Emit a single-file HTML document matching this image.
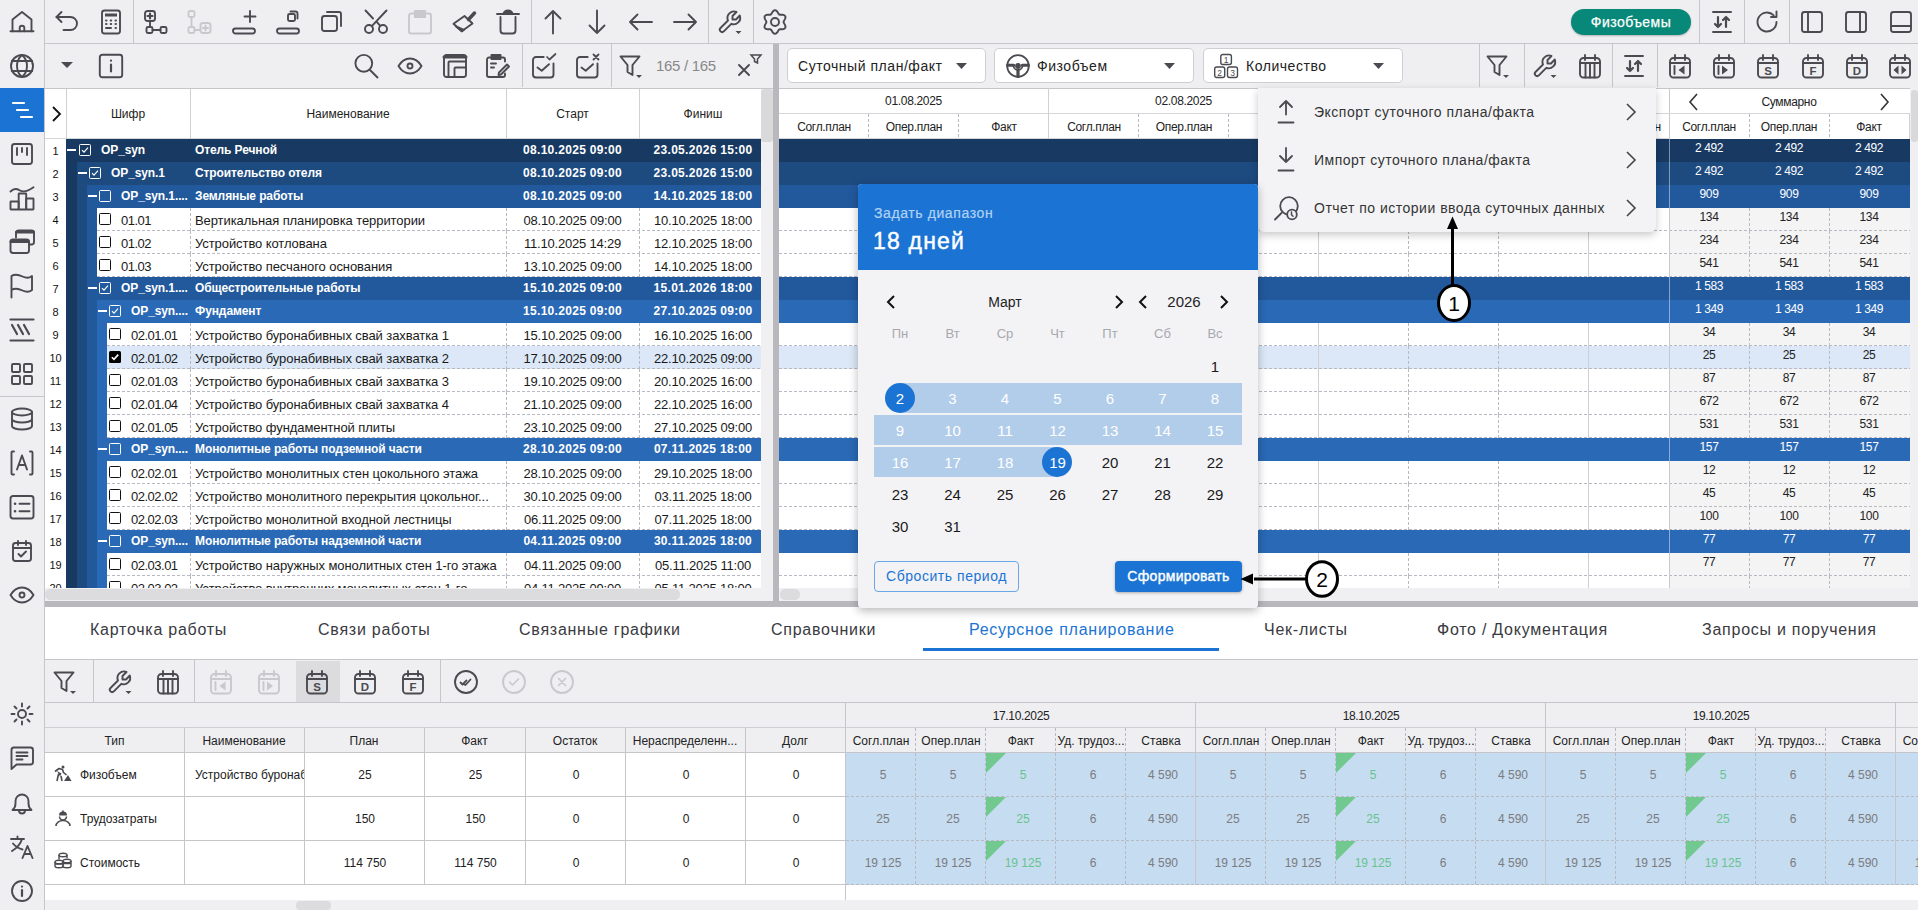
<!DOCTYPE html><html><head><meta charset="utf-8"><style>
*{margin:0;padding:0;box-sizing:border-box}
html,body{width:1918px;height:910px;overflow:hidden;background:#efeff2;font-family:"Liberation Sans",sans-serif;color:#222}
.t{position:absolute;white-space:nowrap;overflow:hidden}
svg{overflow:visible}
</style></head><body>
<div style="position:absolute;left:0px;top:0px;width:44px;height:910px;background:#efeff2"></div>
<div style="position:absolute;left:44px;top:0px;width:1px;height:910px;background:#c6c6ca"></div>
<div style="position:absolute;left:0px;top:88px;width:44px;height:44px;background:#1b74d3"></div>
<div style="position:absolute;left:0px;top:396px;width:44px;height:1px;background:#c6c6ca"></div>
<svg style="position:absolute;left:10.0px;top:10.0px;color:#4a4a50" width="24" height="24" viewBox="0 0 24 24" fill="none" stroke="#4a4a50" stroke-width="1.9" stroke-linecap="round" stroke-linejoin="round" ><path d="M0.5 21.3h23"/><path d="M2.5 21.3V9.5L12 2l9.5 7.5v11.8"/><path d="M9.7 21.3v-3.3a2.3 2.3 0 0 1 4.6 0v3.3"/></svg>
<svg style="position:absolute;left:10.0px;top:54.0px;color:#4a4a50" width="24" height="24" viewBox="0 0 24 24" fill="none" stroke="#4a4a50" stroke-width="1.9" stroke-linecap="round" stroke-linejoin="round" ><circle cx="12" cy="12" r="11"/><path d="M1.8 7h20.4M1.8 17h20.4"/><path d="M12 1c-3.5 3-5 7-5 11s1.5 8 5 11M12 1c3.5 3 5 7 5 11s-1.5 8-5 11"/></svg>
<svg style="position:absolute;left:10.0px;top:98.0px;color:#ffffff" width="24" height="24" viewBox="0 0 24 24" fill="none" stroke="#ffffff" stroke-width="1.9" stroke-linecap="round" stroke-linejoin="round" ><path d="M3 5h11M7 12h11M11 19h11" stroke-width="2.2"/></svg>
<svg style="position:absolute;left:10.0px;top:142.0px;color:#4a4a50" width="24" height="24" viewBox="0 0 24 24" fill="none" stroke="#4a4a50" stroke-width="1.9" stroke-linecap="round" stroke-linejoin="round" ><rect x="2" y="2" width="20" height="20" rx="2.5"/><path d="M7 6v7M12 6v4M17 6v7"/></svg>
<svg style="position:absolute;left:10.0px;top:186.0px;color:#4a4a50" width="24" height="24" viewBox="0 0 24 24" fill="none" stroke="#4a4a50" stroke-width="1.9" stroke-linecap="round" stroke-linejoin="round" ><rect x="0.5" y="15.5" width="8.2" height="8" rx="0.5"/><rect x="8.7" y="7.5" width="7.5" height="16" rx="0.5"/><rect x="16.2" y="12.5" width="7.3" height="11" rx="0.5"/><path d="M0.5 5.5c3-3 6-3 9-1.2s7 2 14-3"/></svg>
<svg style="position:absolute;left:10.0px;top:230.0px;color:#4a4a50" width="24" height="24" viewBox="0 0 24 24" fill="none" stroke="#4a4a50" stroke-width="1.9" stroke-linecap="round" stroke-linejoin="round" ><path d="M6 7.5V3a2.5 2.5 0 0 1 2.5-2.5h13A2.5 2.5 0 0 1 24 3v9a2.5 2.5 0 0 1-2.5 2.5H19.5"/><path d="M6.5 2h17" stroke-width="3"/><rect x="0.5" y="9.5" width="18.5" height="13.5" rx="2.5"/><path d="M1 11.5h17.5" stroke-width="3"/></svg>
<svg style="position:absolute;left:10.0px;top:274.0px;color:#4a4a50" width="24" height="24" viewBox="0 0 24 24" fill="none" stroke="#4a4a50" stroke-width="1.9" stroke-linecap="round" stroke-linejoin="round" ><path d="M1.5 23.5V2c4-2.5 8-1 11 .5s6.5 2 9.5-.5v14c-3 2.5-6.5 2-9.5.5s-7-3-11-.5"/></svg>
<svg style="position:absolute;left:10.0px;top:318.0px;color:#4a4a50" width="24" height="24" viewBox="0 0 24 24" fill="none" stroke="#4a4a50" stroke-width="1.9" stroke-linecap="round" stroke-linejoin="round" ><path d="M0.5 1.5h23M0.5 22.5h23M2 7l5 9M8 7l5 9M14 7l5 9" stroke-width="2.2"/></svg>
<svg style="position:absolute;left:10.0px;top:362.0px;color:#4a4a50" width="24" height="24" viewBox="0 0 24 24" fill="none" stroke="#4a4a50" stroke-width="1.9" stroke-linecap="round" stroke-linejoin="round" ><rect x="2" y="2" width="8" height="8" rx="1"/><rect x="14" y="2" width="8" height="8" rx="1"/><rect x="2" y="14" width="8" height="8" rx="1"/><rect x="14" y="14" width="8" height="8" rx="1"/></svg>
<svg style="position:absolute;left:10.0px;top:407.0px;color:#4a4a50" width="24" height="24" viewBox="0 0 24 24" fill="none" stroke="#4a4a50" stroke-width="1.9" stroke-linecap="round" stroke-linejoin="round" ><ellipse cx="12" cy="5" rx="10" ry="3.5"/><path d="M2 5v14c0 2 4.5 3.5 10 3.5s10-1.5 10-3.5V5M2 12c0 2 4.5 3.5 10 3.5s10-1.5 10-3.5"/></svg>
<svg style="position:absolute;left:10.0px;top:451.0px;color:#4a4a50" width="24" height="24" viewBox="0 0 24 24" fill="none" stroke="#4a4a50" stroke-width="1.9" stroke-linecap="round" stroke-linejoin="round" ><path d="M4 0.5h-1.5a1 1 0 0 0-1 1v21a1 1 0 0 0 1 1H4M20 0.5h1.5a1 1 0 0 1 1 1v21a1 1 0 0 1-1 1H20"/><path d="M7 18.5l5-14 5 14M8.5 14h7" stroke-width="1.9"/></svg>
<svg style="position:absolute;left:10.0px;top:495.0px;color:#4a4a50" width="24" height="24" viewBox="0 0 24 24" fill="none" stroke="#4a4a50" stroke-width="1.9" stroke-linecap="round" stroke-linejoin="round" ><rect x="0.5" y="1" width="23" height="22.5" rx="2.5"/><path d="M5 8.7h.1M5 16.2h.1" stroke-width="2.6"/><path d="M9.5 8.7h10M9.5 16.2h10"/></svg>
<svg style="position:absolute;left:10.0px;top:539.0px;color:#4a4a50" width="24" height="24" viewBox="0 0 24 24" fill="none" stroke="#4a4a50" stroke-width="1.9" stroke-linecap="round" stroke-linejoin="round" ><rect x="3" y="4" width="18" height="18" rx="2.5"/><path d="M3 9h18M8 2v4M16 2v4M8.5 15l2.5 2.5 5-5"/></svg>
<svg style="position:absolute;left:10.0px;top:583.0px;color:#4a4a50" width="24" height="24" viewBox="0 0 24 24" fill="none" stroke="#4a4a50" stroke-width="1.9" stroke-linecap="round" stroke-linejoin="round" ><path d="M0.5 12C3.5 7 7.5 4.5 12 4.5s8.5 2.5 11.5 7.5c-3 5-7 7.5-11.5 7.5S3.5 17 0.5 12z"/><circle cx="12" cy="12" r="2.5"/></svg>
<svg style="position:absolute;left:10.0px;top:702.0px;color:#4a4a50" width="24" height="24" viewBox="0 0 24 24" fill="none" stroke="#4a4a50" stroke-width="1.9" stroke-linecap="round" stroke-linejoin="round" ><circle cx="12" cy="12" r="4"/><path d="M12 1.5v3M12 19.5v3M1.5 12h3M19.5 12h3M4.5 4.5l2 2M17.5 17.5l2 2M4.5 19.5l2-2M17.5 6.5l2-2"/></svg>
<svg style="position:absolute;left:10.0px;top:746.0px;color:#4a4a50" width="24" height="24" viewBox="0 0 24 24" fill="none" stroke="#4a4a50" stroke-width="1.9" stroke-linecap="round" stroke-linejoin="round" ><path d="M3.5 1.5h17a2.5 2.5 0 0 1 2.5 2.5v12a2.5 2.5 0 0 1-2.5 2.5H6.5L1.5 23V4a2.5 2.5 0 0 1 2-2.5z"/><path d="M6.5 6.5h11M6.5 10h11M6.5 13.5h6"/></svg>
<svg style="position:absolute;left:10.0px;top:791.0px;color:#4a4a50" width="24" height="24" viewBox="0 0 24 24" fill="none" stroke="#4a4a50" stroke-width="1.9" stroke-linecap="round" stroke-linejoin="round" ><path d="M2.5 19c1.8-1.5 3-3 3-6.5V10a6.5 6.5 0 0 1 13 0v2.5c0 3.5 1.2 5 3 6.5z"/><path d="M9 19.5a3 3 0 0 0 6 0"/></svg>
<svg style="position:absolute;left:10.0px;top:835.0px;color:#4a4a50" width="24" height="24" viewBox="0 0 24 24" fill="none" stroke="#4a4a50" stroke-width="1.9" stroke-linecap="round" stroke-linejoin="round" ><path d="M1 4h13M7.5 1.5V4M3 8.5c2.5 3 5.5 5 9.5 6M12 4c-1.5 5-5 9-10 12"/><path d="M12.5 23l5-12 5 12M14.2 19h6.6"/></svg>
<svg style="position:absolute;left:10.0px;top:879.0px;color:#4a4a50" width="24" height="24" viewBox="0 0 24 24" fill="none" stroke="#4a4a50" stroke-width="1.9" stroke-linecap="round" stroke-linejoin="round" ><circle cx="12" cy="12" r="10"/><path d="M12 11v6M12 7.5v.1" stroke-width="2.2"/></svg>
<div style="position:absolute;left:45px;top:43px;width:1873px;height:1px;background:#c6c6ca"></div>
<div style="position:absolute;left:45px;top:88px;width:1873px;height:1px;background:#c6c6ca"></div>
<svg style="position:absolute;left:55.0px;top:10.0px;color:#4a4a50" width="24" height="24" viewBox="0 0 24 24" fill="none" stroke="#4a4a50" stroke-width="1.9" stroke-linecap="round" stroke-linejoin="round" ><path d="M1.5 7h14a6.5 6.5 0 0 1 0 13H8.5"/><path d="M6.5 2L1.5 7l5 5"/></svg>
<svg style="position:absolute;left:99.0px;top:10.0px;color:#4a4a50" width="24" height="24" viewBox="0 0 24 24" fill="none" stroke="#4a4a50" stroke-width="1.9" stroke-linecap="round" stroke-linejoin="round" ><rect x="3" y="0.5" width="18" height="23" rx="2.5"/><rect x="6" y="3.5" width="12" height="3" fill="currentColor" stroke="none"/><path d="M7 10.5h.5M11.7 10.5h.5M16.5 10.5h.5M7 14h.5M11.7 14h.5M16.5 14h.5M7 18h5M16.5 18h.5" stroke-width="2"/></svg>
<svg style="position:absolute;left:144.0px;top:10.0px;color:#4a4a50" width="24" height="24" viewBox="0 0 24 24" fill="none" stroke="#4a4a50" stroke-width="1.9" stroke-linecap="round" stroke-linejoin="round" ><rect x="1" y="1" width="10" height="10" rx="2.5"/><path d="M6 3.5v5M3.5 6h5" stroke-width="2.2"/><path d="M6 11v6"/><rect x="2.5" y="17" width="6" height="6" rx="1.5"/><rect x="16.5" y="17" width="6" height="6" rx="1.5"/><path d="M8.5 20h8"/></svg>
<svg style="position:absolute;left:188.0px;top:10.0px;color:#c9c9cd" width="24" height="24" viewBox="0 0 24 24" fill="none" stroke="#c9c9cd" stroke-width="1.9" stroke-linecap="round" stroke-linejoin="round" ><rect x="0.5" y="1" width="6" height="6" rx="1.5"/><path d="M3.5 7v10"/><rect x="0.5" y="17" width="6" height="6" rx="1.5"/><path d="M6.5 20h6"/><rect x="12.5" y="13" width="10" height="10" rx="2.5"/><path d="M17.5 15.5v5M15 18h5"/></svg>
<svg style="position:absolute;left:232.0px;top:10.0px;color:#4a4a50" width="24" height="24" viewBox="0 0 24 24" fill="none" stroke="#4a4a50" stroke-width="1.9" stroke-linecap="round" stroke-linejoin="round" ><path d="M18 1v11M12.5 6.5h11"/><rect x="1" y="18.5" width="22" height="5" rx="2.5"/></svg>
<svg style="position:absolute;left:276.0px;top:10.0px;color:#4a4a50" width="24" height="24" viewBox="0 0 24 24" fill="none" stroke="#4a4a50" stroke-width="1.9" stroke-linecap="round" stroke-linejoin="round" ><rect x="12" y="4" width="7" height="7" rx="1.5"/><path d="M14.5 1.5h5a2 2 0 0 1 2 2v5"/><rect x="1" y="18.5" width="22" height="5" rx="2.5"/></svg>
<svg style="position:absolute;left:320.0px;top:10.0px;color:#4a4a50" width="24" height="24" viewBox="0 0 24 24" fill="none" stroke="#4a4a50" stroke-width="1.9" stroke-linecap="round" stroke-linejoin="round" ><rect x="2" y="6" width="15" height="15" rx="2.5"/><path d="M7 2h12a2 2 0 0 1 2 2v12"/></svg>
<svg style="position:absolute;left:364.0px;top:10.0px;color:#4a4a50" width="24" height="24" viewBox="0 0 24 24" fill="none" stroke="#4a4a50" stroke-width="1.9" stroke-linecap="round" stroke-linejoin="round" ><circle cx="5" cy="19" r="4"/><circle cx="19" cy="19" r="4"/><path d="M22.5 0.5L7.8 16.2M1.5 0.5l7.5 8M13.2 12.3l3 3.6"/></svg>
<svg style="position:absolute;left:408.0px;top:10.0px;color:#c9c9cd" width="24" height="24" viewBox="0 0 24 24" fill="none" stroke="#c9c9cd" stroke-width="1.9" stroke-linecap="round" stroke-linejoin="round" ><path d="M5.5 3.5H3a2 2 0 0 0-2 2v16a2 2 0 0 0 2 2h18a2 2 0 0 0 2-2v-16a2 2 0 0 0-2-2h-2.5"/><rect x="6" y="0" width="12" height="8" fill="currentColor" stroke="none"/></svg>
<svg style="position:absolute;left:452.0px;top:10.0px;color:#4a4a50" width="24" height="24" viewBox="0 0 24 24" fill="none" stroke="#4a4a50" stroke-width="1.9" stroke-linecap="round" stroke-linejoin="round" ><path d="M1.5 13.8L12.5 6l8 7.5-10.8 7.8z"/><path d="M4 16.5l6 4.8 2-1.5z" fill="currentColor"/><path d="M16.5 9.5l6-6.5" stroke-width="3.5"/></svg>
<svg style="position:absolute;left:496.0px;top:10.0px;color:#4a4a50" width="24" height="24" viewBox="0 0 24 24" fill="none" stroke="#4a4a50" stroke-width="1.9" stroke-linecap="round" stroke-linejoin="round" ><path d="M1 4h22"/><path d="M7.5 4a4.5 3.5 0 0 1 9 0z" fill="currentColor"/><path d="M4.5 7v13.5a3 3 0 0 0 3 3h9a3 3 0 0 0 3-3V7"/></svg>
<svg style="position:absolute;left:541.0px;top:10.0px;color:#4a4a50" width="24" height="24" viewBox="0 0 24 24" fill="none" stroke="#4a4a50" stroke-width="1.9" stroke-linecap="round" stroke-linejoin="round" ><path d="M12 23.5V1M4.5 8.5L12 1l7.5 7.5"/></svg>
<svg style="position:absolute;left:585.0px;top:10.0px;color:#4a4a50" width="24" height="24" viewBox="0 0 24 24" fill="none" stroke="#4a4a50" stroke-width="1.9" stroke-linecap="round" stroke-linejoin="round" ><path d="M12 0.5V23M4.5 15.5L12 23l7.5-7.5"/></svg>
<svg style="position:absolute;left:629.0px;top:10.0px;color:#4a4a50" width="24" height="24" viewBox="0 0 24 24" fill="none" stroke="#4a4a50" stroke-width="1.9" stroke-linecap="round" stroke-linejoin="round" ><path d="M23 12H1M8.5 4.5L1 12l7.5 7.5"/></svg>
<svg style="position:absolute;left:673.0px;top:10.0px;color:#4a4a50" width="24" height="24" viewBox="0 0 24 24" fill="none" stroke="#4a4a50" stroke-width="1.9" stroke-linecap="round" stroke-linejoin="round" ><path d="M1 12h22M15.5 4.5L23 12l-7.5 7.5"/></svg>
<svg style="position:absolute;left:718.0px;top:10.0px;color:#4a4a50" width="24" height="24" viewBox="0 0 24 24" fill="none" stroke="#4a4a50" stroke-width="1.9" stroke-linecap="round" stroke-linejoin="round" ><g transform="translate(24,0) scale(-1,1)"><path d="M6 9.5h3.5V6L5.5 2a6.5 6.5 0 0 1 8.5 8.5l7.5 7.5a2.3 2.3 0 0 1-3.3 3.3l-7.5-7.5A6.5 6.5 0 0 1 2.2 5.5z"/></g><path d="M17.5 21h6l-3 3z" fill="currentColor" stroke="none"/></svg>
<svg style="position:absolute;left:763.0px;top:10.0px;color:#4a4a50" width="24" height="24" viewBox="0 0 24 24" fill="none" stroke="#4a4a50" stroke-width="1.9" stroke-linecap="round" stroke-linejoin="round" ><path d="M12.00 0.20 L13.01 0.46 L13.91 1.17 L14.64 2.15 L15.21 3.17 L15.73 4.01 L16.30 4.55 L17.06 4.78 L18.04 4.80 L19.21 4.79 L20.43 4.93 L21.49 5.35 L22.22 6.10 L22.50 7.10 L22.34 8.24 L21.85 9.36 L21.26 10.37 L20.78 11.23 L20.60 12.00 L20.78 12.77 L21.26 13.63 L21.85 14.64 L22.34 15.76 L22.50 16.90 L22.22 17.90 L21.49 18.65 L20.43 19.07 L19.21 19.21 L18.04 19.20 L17.06 19.22 L16.30 19.45 L15.73 19.99 L15.21 20.83 L14.64 21.85 L13.91 22.83 L13.01 23.54 L12.00 23.80 L10.99 23.54 L10.09 22.83 L9.36 21.85 L8.79 20.83 L8.27 19.99 L7.70 19.45 L6.94 19.22 L5.96 19.20 L4.79 19.21 L3.57 19.07 L2.51 18.65 L1.78 17.90 L1.50 16.90 L1.66 15.76 L2.15 14.64 L2.74 13.63 L3.22 12.77 L3.40 12.00 L3.22 11.23 L2.74 10.37 L2.15 9.36 L1.66 8.24 L1.50 7.10 L1.78 6.10 L2.51 5.35 L3.57 4.93 L4.79 4.79 L5.96 4.80 L6.94 4.78 L7.70 4.55 L8.27 4.01 L8.79 3.17 L9.36 2.15 L10.09 1.17 L10.99 0.46 L12.00 0.20z"/><circle cx="12" cy="12" r="4"/></svg>
<div style="position:absolute;left:133px;top:0px;width:1px;height:43px;background:#c6c6ca"></div>
<div style="position:absolute;left:531px;top:0px;width:1px;height:43px;background:#c6c6ca"></div>
<div style="position:absolute;left:708px;top:0px;width:1px;height:43px;background:#c6c6ca"></div>
<div style="position:absolute;left:753px;top:0px;width:1px;height:43px;background:#c6c6ca"></div>
<div style="position:absolute;left:1571px;top:9px;width:120px;height:26px;border-radius:13px;background:#078878;color:#fff;font-size:14px;line-height:26px;text-align:center;letter-spacing:0.45px;-webkit-text-stroke:0.25px #fff;box-shadow:0 1px 2px rgba(0,0,0,.25)">Физобъемы</div>
<div style="position:absolute;left:1699px;top:0px;width:1px;height:43px;background:#c6c6ca"></div>
<div style="position:absolute;left:1744px;top:0px;width:1px;height:43px;background:#c6c6ca"></div>
<div style="position:absolute;left:1789px;top:0px;width:1px;height:43px;background:#c6c6ca"></div>
<svg style="position:absolute;left:1710.0px;top:10.0px;color:#4a4a50" width="24" height="24" viewBox="0 0 24 24" fill="none" stroke="#4a4a50" stroke-width="1.9" stroke-linecap="round" stroke-linejoin="round" ><path d="M3 2h18M3 22h18"/><path d="M8 7v10M5 14l3 3 3-3M16 17V7M13 10l3-3 3 3" stroke-width="2.2"/></svg>
<svg style="position:absolute;left:1755.0px;top:10.0px;color:#4a4a50" width="24" height="24" viewBox="0 0 24 24" fill="none" stroke="#4a4a50" stroke-width="1.9" stroke-linecap="round" stroke-linejoin="round" ><path d="M21.5 12A9.5 9.5 0 1 1 18.7 5.3"/><path d="M21.5 1.5v5.5H16"/></svg>
<svg style="position:absolute;left:1800.0px;top:10.0px;color:#4a4a50" width="24" height="24" viewBox="0 0 24 24" fill="none" stroke="#4a4a50" stroke-width="1.9" stroke-linecap="round" stroke-linejoin="round" ><rect x="2" y="2" width="20" height="20" rx="2.5"/><path d="M8 2v20"/></svg>
<svg style="position:absolute;left:1844.0px;top:10.0px;color:#4a4a50" width="24" height="24" viewBox="0 0 24 24" fill="none" stroke="#4a4a50" stroke-width="1.9" stroke-linecap="round" stroke-linejoin="round" ><rect x="2" y="2" width="20" height="20" rx="2.5"/><path d="M16 2v20"/></svg>
<svg style="position:absolute;left:1889.0px;top:10.0px;color:#4a4a50" width="24" height="24" viewBox="0 0 24 24" fill="none" stroke="#4a4a50" stroke-width="1.9" stroke-linecap="round" stroke-linejoin="round" ><rect x="2" y="2" width="20" height="20" rx="2.5"/><path d="M2 16h20"/></svg>
<svg style="position:absolute;left:61px;top:62px" width="12" height="6"><path d="M0 0h12L6 6z" fill="#4a4a50"/></svg>
<svg style="position:absolute;left:99.0px;top:54.0px;color:#4a4a50" width="24" height="24" viewBox="0 0 24 24" fill="none" stroke="#4a4a50" stroke-width="1.9" stroke-linecap="round" stroke-linejoin="round" ><rect x="0.8" y="0.8" width="22.4" height="22.4" rx="2.5"/><path d="M12 10.5v7M12 6.5v.2" stroke-width="2.2"/></svg>
<svg style="position:absolute;left:354.0px;top:54.0px;color:#4a4a50" width="24" height="24" viewBox="0 0 24 24" fill="none" stroke="#4a4a50" stroke-width="1.9" stroke-linecap="round" stroke-linejoin="round" ><circle cx="9.8" cy="9.3" r="8.4"/><path d="M16 16l7.5 7.5"/></svg>
<svg style="position:absolute;left:398.0px;top:54.0px;color:#4a4a50" width="24" height="24" viewBox="0 0 24 24" fill="none" stroke="#4a4a50" stroke-width="1.9" stroke-linecap="round" stroke-linejoin="round" ><path d="M0.5 12C3.5 7 7.5 4.5 12 4.5s8.5 2.5 11.5 7.5c-3 5-7 7.5-11.5 7.5S3.5 17 0.5 12z"/><circle cx="12" cy="12" r="2.5"/></svg>
<svg style="position:absolute;left:443.0px;top:54.0px;color:#4a4a50" width="24" height="24" viewBox="0 0 24 24" fill="none" stroke="#4a4a50" stroke-width="1.9" stroke-linecap="round" stroke-linejoin="round" ><rect x="1" y="1" width="22" height="22" rx="2.5"/><path d="M1 3h22" stroke-width="3"/><path d="M23 7.5H6.5a1 1 0 0 0-1 1V23"/><path d="M23 13.5H12.5a1 1 0 0 0-1 1V23"/></svg>
<svg style="position:absolute;left:486.0px;top:54.0px;color:#4a4a50" width="24" height="24" viewBox="0 0 24 24" fill="none" stroke="#4a4a50" stroke-width="1.9" stroke-linecap="round" stroke-linejoin="round" ><path d="M4.5 3.5H3a2 2 0 0 0-2 2V21a2 2 0 0 0 2 2h14a2 2 0 0 0 2-2v-1.5M15.5 3.5H17a2 2 0 0 1 2 2v2"/><rect x="4.5" y="0" width="11" height="6" rx="1" fill="currentColor" stroke="none"/><path d="M5 9.5h5M5 13.5h3"/><path d="M21 10.5l2 2-8 8-2.5.5.5-2.5z"/></svg>
<svg style="position:absolute;left:531.0px;top:54.0px;color:#4a4a50" width="24" height="24" viewBox="0 0 24 24" fill="none" stroke="#4a4a50" stroke-width="1.9" stroke-linecap="round" stroke-linejoin="round" ><path d="M12.7 3H5a3 3 0 0 0-3 3v14.5a3 3 0 0 0 3 3h14.5a3 3 0 0 0 3-3V9.5"/><path d="M6.5 13.5l4.2 3.2 7.3-6.5"/><path d="M16 3l2.5 2.5 6-5.5" stroke-width="1.7"/></svg>
<svg style="position:absolute;left:575.0px;top:54.0px;color:#4a4a50" width="24" height="24" viewBox="0 0 24 24" fill="none" stroke="#4a4a50" stroke-width="1.9" stroke-linecap="round" stroke-linejoin="round" ><path d="M12.7 3H5a3 3 0 0 0-3 3v14.5a3 3 0 0 0 3 3h14.5a3 3 0 0 0 3-3V9.5"/><path d="M6.5 13.5l4.2 3.2 7.3-6.5"/><path d="M18.5 0.5l5 5M23.5 0.5l-5 5" stroke-width="1.8"/></svg>
<svg style="position:absolute;left:619.0px;top:54.0px;color:#4a4a50" width="24" height="24" viewBox="0 0 24 24" fill="none" stroke="#4a4a50" stroke-width="1.9" stroke-linecap="round" stroke-linejoin="round" ><path d="M1.5 2.5h19L13.5 11v10l-5-3v-7z"/><path d="M17 21h6l-3 3z" fill="currentColor" stroke="none"/></svg>
<div style="position:absolute;left:522px;top:44px;width:1px;height:43px;background:#c6c6ca"></div>
<div style="position:absolute;left:611px;top:44px;width:1px;height:43px;background:#c6c6ca"></div>
<div style="position:absolute;left:656px;top:55px;width:70px;height:22px;line-height:22px;font-size:15px;color:#888;letter-spacing:-0.3px">165 / 165</div>
<svg style="position:absolute;left:736px;top:52px" width="28" height="28" viewBox="0 0 28 28" fill="none" stroke="#4a4a50" stroke-width="1.9" stroke-linecap="round"><path d="M3 13l10 10M13 13L3 23"/><path d="M15 3h10l-3.5 4v4l-3-1.5V7z" stroke-width="1.5"/></svg>
<div style="position:absolute;left:761px;top:89px;width:12px;height:512px;background:#f0f0f3"></div>
<div style="position:absolute;left:773px;top:44px;width:6px;height:563px;background:#b8b8bd"></div>
<div style="position:absolute;left:787px;top:48px;width:199px;height:35px;background:#fff;border:1px solid #cfcfd3;border-radius:5px"></div>
<div style="position:absolute;left:798px;top:49px;width:150px;height:34px;line-height:34px;font-size:14px;color:#222;letter-spacing:0.54px">Суточный план/факт</div>
<svg style="position:absolute;left:956px;top:63px" width="11" height="6"><path d="M0 0h11L5.5 6z" fill="#4a4a50"/></svg>
<div style="position:absolute;left:994px;top:48px;width:200px;height:35px;background:#fff;border:1px solid #cfcfd3;border-radius:5px"></div>
<div style="position:absolute;left:1037px;top:49px;width:150px;height:34px;line-height:34px;font-size:14px;color:#222;letter-spacing:0.54px">Физобъем</div>
<svg style="position:absolute;left:1164px;top:63px" width="11" height="6"><path d="M0 0h11L5.5 6z" fill="#4a4a50"/></svg>
<div style="position:absolute;left:1203px;top:48px;width:200px;height:35px;background:#fff;border:1px solid #cfcfd3;border-radius:5px"></div>
<div style="position:absolute;left:1246px;top:49px;width:150px;height:34px;line-height:34px;font-size:14px;color:#222;letter-spacing:0.54px">Количество</div>
<svg style="position:absolute;left:1373px;top:63px" width="11" height="6"><path d="M0 0h11L5.5 6z" fill="#4a4a50"/></svg>
<svg style="position:absolute;left:1006.0px;top:54.0px;color:#4a4a50" width="24" height="24" viewBox="0 0 24 24" fill="none" stroke="#4a4a50" stroke-width="1.8" stroke-linecap="round" stroke-linejoin="round" ><circle cx="12" cy="12" r="10.8"/><circle cx="12" cy="12" r="2.9" fill="currentColor" stroke="none"/><path d="M1.5 11.3h6.2M16.3 11.3h6.2" stroke-width="3"/><path d="M12 16v6.5" stroke-width="3.2"/><path d="M7.5 11.5c0 2.5 2 4.5 4.5 4.5s4.5-2 4.5-4.5" stroke-width="1.6"/></svg>
<svg style="position:absolute;left:1214.0px;top:54.0px;color:#4a4a50" width="24" height="24" viewBox="0 0 24 24" fill="none" stroke="#4a4a50" stroke-width="1.4" stroke-linecap="round" stroke-linejoin="round" ><rect x="6.8" y="0.5" width="10.6" height="10" rx="2"/><rect x="0.7" y="13" width="10" height="10.5" rx="2"/><rect x="13.5" y="13" width="10" height="10.5" rx="2"/><text x="12.1" y="8.8" font-size="8.5" text-anchor="middle" fill="currentColor" stroke="none" font-family="Liberation Sans">1</text><text x="5.7" y="21.5" font-size="8.5" text-anchor="middle" fill="currentColor" stroke="none" font-family="Liberation Sans">2</text><text x="18.5" y="21.5" font-size="8.5" text-anchor="middle" fill="currentColor" stroke="none" font-family="Liberation Sans">3</text></svg>
<div style="position:absolute;left:1479px;top:44px;width:1px;height:43px;background:#c6c6ca"></div>
<div style="position:absolute;left:1524px;top:44px;width:1px;height:43px;background:#c6c6ca"></div>
<div style="position:absolute;left:1612px;top:44px;width:1px;height:43px;background:#c6c6ca"></div>
<div style="position:absolute;left:1657px;top:44px;width:1px;height:43px;background:#c6c6ca"></div>
<svg style="position:absolute;left:1486.0px;top:54.0px;color:#4a4a50" width="24" height="24" viewBox="0 0 24 24" fill="none" stroke="#4a4a50" stroke-width="1.9" stroke-linecap="round" stroke-linejoin="round" ><path d="M1.5 2.5h19L13.5 11v10l-5-3v-7z"/><path d="M17 21h6l-3 3z" fill="currentColor" stroke="none"/></svg>
<svg style="position:absolute;left:1533.0px;top:54.0px;color:#4a4a50" width="24" height="24" viewBox="0 0 24 24" fill="none" stroke="#4a4a50" stroke-width="1.9" stroke-linecap="round" stroke-linejoin="round" ><g transform="translate(24,0) scale(-1,1)"><path d="M6 9.5h3.5V6L5.5 2a6.5 6.5 0 0 1 8.5 8.5l7.5 7.5a2.3 2.3 0 0 1-3.3 3.3l-7.5-7.5A6.5 6.5 0 0 1 2.2 5.5z"/></g><path d="M17.5 21h6l-3 3z" fill="currentColor" stroke="none"/></svg>
<svg style="position:absolute;left:1578.0px;top:54.0px;color:#4a4a50" width="24" height="24" viewBox="0 0 24 24" fill="none" stroke="#4a4a50" stroke-width="1.9" stroke-linecap="round" stroke-linejoin="round" ><rect x="2" y="4" width="20" height="19.5" rx="3.5"/><path d="M2 9h20M7.5 9v14.5M12 9v14.5M16.5 9v14.5M7 1v5M17 1v5"/></svg>
<svg style="position:absolute;left:1622.0px;top:54.0px;color:#4a4a50" width="24" height="24" viewBox="0 0 24 24" fill="none" stroke="#4a4a50" stroke-width="1.9" stroke-linecap="round" stroke-linejoin="round" ><path d="M3 2h18M3 22h18"/><path d="M8 7v10M5 14l3 3 3-3M16 17V7M13 10l3-3 3 3" stroke-width="2.2"/></svg>
<svg style="position:absolute;left:1668.0px;top:54.0px;color:#4a4a50" width="24" height="24" viewBox="0 0 24 24" fill="none" stroke="#4a4a50" stroke-width="1.9" stroke-linecap="round" stroke-linejoin="round" ><rect x="2" y="4" width="20" height="19.5" rx="3.5"/><path d="M2 9h20M7 1v5M17 1v5"/><path d="M6.5 12v8"/><path d="M16.5 11.5v9l-6-4.5z" fill="currentColor" stroke="none"/></svg>
<svg style="position:absolute;left:1712.0px;top:54.0px;color:#4a4a50" width="24" height="24" viewBox="0 0 24 24" fill="none" stroke="#4a4a50" stroke-width="1.9" stroke-linecap="round" stroke-linejoin="round" ><rect x="2" y="4" width="20" height="19.5" rx="3.5"/><path d="M2 9h20M7 1v5M17 1v5"/><path d="M6.5 12v8"/><path d="M10 11.5v9l6-4.5z" fill="currentColor" stroke="none"/></svg>
<svg style="position:absolute;left:1756.0px;top:54.0px;color:#4a4a50" width="24" height="24" viewBox="0 0 24 24" fill="none" stroke="#4a4a50" stroke-width="1.9" stroke-linecap="round" stroke-linejoin="round" ><rect x="2" y="4" width="20" height="19.5" rx="3.5"/><path d="M2 9h20M7 1v5M17 1v5"/><text x="12" y="20.8" font-size="11.5" font-weight="bold" text-anchor="middle" fill="currentColor" stroke="none" font-family="Liberation Sans">S</text></svg>
<svg style="position:absolute;left:1801.0px;top:54.0px;color:#4a4a50" width="24" height="24" viewBox="0 0 24 24" fill="none" stroke="#4a4a50" stroke-width="1.9" stroke-linecap="round" stroke-linejoin="round" ><rect x="2" y="4" width="20" height="19.5" rx="3.5"/><path d="M2 9h20M7 1v5M17 1v5"/><text x="12" y="20.8" font-size="11.5" font-weight="bold" text-anchor="middle" fill="currentColor" stroke="none" font-family="Liberation Sans">F</text></svg>
<svg style="position:absolute;left:1845.0px;top:54.0px;color:#4a4a50" width="24" height="24" viewBox="0 0 24 24" fill="none" stroke="#4a4a50" stroke-width="1.9" stroke-linecap="round" stroke-linejoin="round" ><rect x="2" y="4" width="20" height="19.5" rx="3.5"/><path d="M2 9h20M7 1v5M17 1v5"/><text x="12" y="20.8" font-size="11.5" font-weight="bold" text-anchor="middle" fill="currentColor" stroke="none" font-family="Liberation Sans">D</text></svg>
<svg style="position:absolute;left:1888.0px;top:54.0px;color:#4a4a50" width="24" height="24" viewBox="0 0 24 24" fill="none" stroke="#4a4a50" stroke-width="1.9" stroke-linecap="round" stroke-linejoin="round" ><rect x="2" y="4" width="20" height="19.5" rx="3.5"/><path d="M2 9h20M7 1v5M17 1v5"/><path d="M10.5 11.5v9l-5-4.5zM13.5 11.5v9l5-4.5z" fill="currentColor" stroke="none"/></svg>
<div style="position:absolute;left:45px;top:89px;width:716px;height:511px;background:#fff"></div>
<div style="position:absolute;left:45px;top:89px;width:716px;height:50px;background:#fff"></div>
<div style="position:absolute;left:45px;top:138px;width:716px;height:1px;background:#d6d6da"></div>
<div style="position:absolute;left:66px;top:89px;width:1px;height:50px;background:#d0d0d4"></div>
<div style="position:absolute;left:190px;top:89px;width:1px;height:50px;background:#d0d0d4"></div>
<div style="position:absolute;left:506px;top:89px;width:1px;height:50px;background:#d0d0d4"></div>
<div style="position:absolute;left:639px;top:89px;width:1px;height:50px;background:#d0d0d4"></div>
<svg style="position:absolute;left:50px;top:105px" width="12" height="18" viewBox="0 0 12 18" fill="none" stroke="#111" stroke-width="1.8"><path d="M3 2l7 7-7 7"/></svg>
<div style="position:absolute;left:66px;top:102px;width:124px;height:24px;line-height:24px;font-size:12px;color:#222;text-align:center">Шифр</div>
<div style="position:absolute;left:190px;top:102px;width:316px;height:24px;line-height:24px;font-size:12px;color:#222;text-align:center">Наименование</div>
<div style="position:absolute;left:506px;top:102px;width:133px;height:24px;line-height:24px;font-size:12px;color:#222;text-align:center">Старт</div>
<div style="position:absolute;left:642px;top:102px;width:122px;height:24px;line-height:24px;font-size:12px;color:#222;text-align:center">Финиш</div>
<div style="position:absolute;left:45px;top:139px;width:716px;height:449px;overflow:hidden">
<div style="position:absolute;left:0px;top:1px;width:21px;height:23px;line-height:23px;font-size:11px;color:#111;text-align:center">1</div>
<div style="position:absolute;left:21px;top:0px;width:695px;height:23px;background:#183a62"></div>
<div style="position:absolute;left:22px;top:10px;width:9px;height:2px;background:#fff"></div>
<div style="position:absolute;left:34px;top:5px;width:12px;height:12px;border:1px solid #fff;border-radius:1.5px"></div>
<svg style="position:absolute;left:34px;top:5px" width="12" height="12" viewBox="0 0 12 12" fill="none" stroke="#fff" stroke-width="1.2"><path d="M3 6.2l2 2 4-4.5"/></svg>
<div style="position:absolute;left:56px;top:0px;width:88px;height:23px;line-height:23px;font-size:12px;font-weight:bold;color:#fff;letter-spacing:-0.1px">OP_syn</div>
<div style="position:absolute;left:150px;top:0px;width:310px;height:23px;line-height:23px;font-size:12px;font-weight:bold;color:#fff;letter-spacing:-0.1px">Отель Речной</div>
<div style="position:absolute;left:461px;top:0px;width:133px;height:23px;line-height:23px;font-size:12px;font-weight:bold;color:#fff;letter-spacing:-0.1px;text-align:center;letter-spacing:0.3px">08.10.2025 09:00</div>
<div style="position:absolute;left:597px;top:0px;width:122px;height:23px;line-height:23px;font-size:12px;font-weight:bold;color:#fff;letter-spacing:-0.1px;text-align:center;letter-spacing:0.3px">23.05.2026 15:00</div>
<div style="position:absolute;left:0px;top:24px;width:21px;height:23px;line-height:23px;font-size:11px;color:#111;text-align:center">2</div>
<div style="position:absolute;left:21px;top:23px;width:11px;height:23px;background:#183a62"></div>
<div style="position:absolute;left:32px;top:23px;width:684px;height:23px;background:#1d4a7f"></div>
<div style="position:absolute;left:33px;top:33px;width:9px;height:2px;background:#fff"></div>
<div style="position:absolute;left:44px;top:28px;width:12px;height:12px;border:1px solid #fff;border-radius:1.5px"></div>
<svg style="position:absolute;left:44px;top:28px" width="12" height="12" viewBox="0 0 12 12" fill="none" stroke="#fff" stroke-width="1.2"><path d="M3 6.2l2 2 4-4.5"/></svg>
<div style="position:absolute;left:66px;top:23px;width:77px;height:23px;line-height:23px;font-size:12px;font-weight:bold;color:#fff;letter-spacing:-0.1px">OP_syn.1</div>
<div style="position:absolute;left:150px;top:23px;width:310px;height:23px;line-height:23px;font-size:12px;font-weight:bold;color:#fff;letter-spacing:-0.1px">Строительство отеля</div>
<div style="position:absolute;left:461px;top:23px;width:133px;height:23px;line-height:23px;font-size:12px;font-weight:bold;color:#fff;letter-spacing:-0.1px;text-align:center;letter-spacing:0.3px">08.10.2025 09:00</div>
<div style="position:absolute;left:597px;top:23px;width:122px;height:23px;line-height:23px;font-size:12px;font-weight:bold;color:#fff;letter-spacing:-0.1px;text-align:center;letter-spacing:0.3px">23.05.2026 15:00</div>
<div style="position:absolute;left:0px;top:47px;width:21px;height:23px;line-height:23px;font-size:11px;color:#111;text-align:center">3</div>
<div style="position:absolute;left:21px;top:46px;width:11px;height:23px;background:#183a62"></div>
<div style="position:absolute;left:32px;top:46px;width:10px;height:23px;background:#1d4a7f"></div>
<div style="position:absolute;left:42px;top:46px;width:674px;height:23px;background:#22599d"></div>
<div style="position:absolute;left:43px;top:56px;width:9px;height:2px;background:#fff"></div>
<div style="position:absolute;left:54px;top:51px;width:12px;height:12px;border:1px solid #fff;border-radius:1.5px"></div>
<div style="position:absolute;left:76px;top:46px;width:67px;height:23px;line-height:23px;font-size:12px;font-weight:bold;color:#fff;letter-spacing:-0.1px">OP_syn.1....</div>
<div style="position:absolute;left:150px;top:46px;width:310px;height:23px;line-height:23px;font-size:12px;font-weight:bold;color:#fff;letter-spacing:-0.1px">Земляные работы</div>
<div style="position:absolute;left:461px;top:46px;width:133px;height:23px;line-height:23px;font-size:12px;font-weight:bold;color:#fff;letter-spacing:-0.1px;text-align:center;letter-spacing:0.3px">08.10.2025 09:00</div>
<div style="position:absolute;left:597px;top:46px;width:122px;height:23px;line-height:23px;font-size:12px;font-weight:bold;color:#fff;letter-spacing:-0.1px;text-align:center;letter-spacing:0.3px">14.10.2025 18:00</div>
<div style="position:absolute;left:0px;top:70px;width:21px;height:23px;line-height:23px;font-size:11px;color:#111;text-align:center">4</div>
<div style="position:absolute;left:21px;top:69px;width:11px;height:23px;background:#183a62"></div>
<div style="position:absolute;left:32px;top:69px;width:10px;height:23px;background:#1d4a7f"></div>
<div style="position:absolute;left:42px;top:69px;width:10px;height:23px;background:#22599d"></div>
<div style="position:absolute;left:52px;top:69px;width:664px;height:23px;background:#fff"></div>
<div style="position:absolute;left:52px;top:91px;width:664px;height:1px;background:repeating-linear-gradient(90deg,#b9b9c3 0 3px,transparent 3px 5px)"></div>
<div style="position:absolute;left:145px;top:69px;width:1px;height:23px;background:repeating-linear-gradient(180deg,#b9b9c3 0 3px,transparent 3px 5px)"></div>
<div style="position:absolute;left:461px;top:69px;width:1px;height:23px;background:repeating-linear-gradient(180deg,#b9b9c3 0 3px,transparent 3px 5px)"></div>
<div style="position:absolute;left:594px;top:69px;width:1px;height:23px;background:repeating-linear-gradient(180deg,#b9b9c3 0 3px,transparent 3px 5px)"></div>
<div style="position:absolute;left:54px;top:74px;width:12px;height:12px;border:1.3px solid #111;border-radius:1.5px;background:#fff"></div>
<div style="position:absolute;left:76px;top:69.5px;width:69px;height:23px;line-height:23px;font-size:13px;color:#1a1a1a;letter-spacing:-0.5px">01.01</div>
<div style="position:absolute;left:150px;top:69.5px;width:310px;height:23px;line-height:23px;font-size:13px;color:#1a1a1a;letter-spacing:-0.08px">Вертикальная планировка территории</div>
<div style="position:absolute;left:461px;top:69.5px;width:133px;height:23px;line-height:23px;font-size:13px;color:#1a1a1a;text-align:center;letter-spacing:-0.2px">08.10.2025 09:00</div>
<div style="position:absolute;left:597px;top:69.5px;width:122px;height:23px;line-height:23px;font-size:13px;color:#1a1a1a;text-align:center;letter-spacing:-0.2px">10.10.2025 18:00</div>
<div style="position:absolute;left:0px;top:93px;width:21px;height:23px;line-height:23px;font-size:11px;color:#111;text-align:center">5</div>
<div style="position:absolute;left:21px;top:92px;width:11px;height:23px;background:#183a62"></div>
<div style="position:absolute;left:32px;top:92px;width:10px;height:23px;background:#1d4a7f"></div>
<div style="position:absolute;left:42px;top:92px;width:10px;height:23px;background:#22599d"></div>
<div style="position:absolute;left:52px;top:92px;width:664px;height:23px;background:#fff"></div>
<div style="position:absolute;left:52px;top:114px;width:664px;height:1px;background:repeating-linear-gradient(90deg,#b9b9c3 0 3px,transparent 3px 5px)"></div>
<div style="position:absolute;left:145px;top:92px;width:1px;height:23px;background:repeating-linear-gradient(180deg,#b9b9c3 0 3px,transparent 3px 5px)"></div>
<div style="position:absolute;left:461px;top:92px;width:1px;height:23px;background:repeating-linear-gradient(180deg,#b9b9c3 0 3px,transparent 3px 5px)"></div>
<div style="position:absolute;left:594px;top:92px;width:1px;height:23px;background:repeating-linear-gradient(180deg,#b9b9c3 0 3px,transparent 3px 5px)"></div>
<div style="position:absolute;left:54px;top:97px;width:12px;height:12px;border:1.3px solid #111;border-radius:1.5px;background:#fff"></div>
<div style="position:absolute;left:76px;top:92.5px;width:69px;height:23px;line-height:23px;font-size:13px;color:#1a1a1a;letter-spacing:-0.5px">01.02</div>
<div style="position:absolute;left:150px;top:92.5px;width:310px;height:23px;line-height:23px;font-size:13px;color:#1a1a1a;letter-spacing:-0.08px">Устройство котлована</div>
<div style="position:absolute;left:461px;top:92.5px;width:133px;height:23px;line-height:23px;font-size:13px;color:#1a1a1a;text-align:center;letter-spacing:-0.2px">11.10.2025 14:29</div>
<div style="position:absolute;left:597px;top:92.5px;width:122px;height:23px;line-height:23px;font-size:13px;color:#1a1a1a;text-align:center;letter-spacing:-0.2px">12.10.2025 18:00</div>
<div style="position:absolute;left:0px;top:116px;width:21px;height:23px;line-height:23px;font-size:11px;color:#111;text-align:center">6</div>
<div style="position:absolute;left:21px;top:115px;width:11px;height:23px;background:#183a62"></div>
<div style="position:absolute;left:32px;top:115px;width:10px;height:23px;background:#1d4a7f"></div>
<div style="position:absolute;left:42px;top:115px;width:10px;height:23px;background:#22599d"></div>
<div style="position:absolute;left:52px;top:115px;width:664px;height:23px;background:#fff"></div>
<div style="position:absolute;left:52px;top:137px;width:664px;height:1px;background:repeating-linear-gradient(90deg,#b9b9c3 0 3px,transparent 3px 5px)"></div>
<div style="position:absolute;left:145px;top:115px;width:1px;height:23px;background:repeating-linear-gradient(180deg,#b9b9c3 0 3px,transparent 3px 5px)"></div>
<div style="position:absolute;left:461px;top:115px;width:1px;height:23px;background:repeating-linear-gradient(180deg,#b9b9c3 0 3px,transparent 3px 5px)"></div>
<div style="position:absolute;left:594px;top:115px;width:1px;height:23px;background:repeating-linear-gradient(180deg,#b9b9c3 0 3px,transparent 3px 5px)"></div>
<div style="position:absolute;left:54px;top:120px;width:12px;height:12px;border:1.3px solid #111;border-radius:1.5px;background:#fff"></div>
<div style="position:absolute;left:76px;top:115.5px;width:69px;height:23px;line-height:23px;font-size:13px;color:#1a1a1a;letter-spacing:-0.5px">01.03</div>
<div style="position:absolute;left:150px;top:115.5px;width:310px;height:23px;line-height:23px;font-size:13px;color:#1a1a1a;letter-spacing:-0.08px">Устройство песчаного основания</div>
<div style="position:absolute;left:461px;top:115.5px;width:133px;height:23px;line-height:23px;font-size:13px;color:#1a1a1a;text-align:center;letter-spacing:-0.2px">13.10.2025 09:00</div>
<div style="position:absolute;left:597px;top:115.5px;width:122px;height:23px;line-height:23px;font-size:13px;color:#1a1a1a;text-align:center;letter-spacing:-0.2px">14.10.2025 18:00</div>
<div style="position:absolute;left:0px;top:139px;width:21px;height:23px;line-height:23px;font-size:11px;color:#111;text-align:center">7</div>
<div style="position:absolute;left:21px;top:138px;width:11px;height:23px;background:#183a62"></div>
<div style="position:absolute;left:32px;top:138px;width:10px;height:23px;background:#1d4a7f"></div>
<div style="position:absolute;left:42px;top:138px;width:674px;height:23px;background:#22599d"></div>
<div style="position:absolute;left:43px;top:148px;width:9px;height:2px;background:#fff"></div>
<div style="position:absolute;left:54px;top:143px;width:12px;height:12px;border:1px solid #fff;border-radius:1.5px"></div>
<svg style="position:absolute;left:54px;top:143px" width="12" height="12" viewBox="0 0 12 12" fill="none" stroke="#fff" stroke-width="1.2"><path d="M3 6.2l2 2 4-4.5"/></svg>
<div style="position:absolute;left:76px;top:138px;width:67px;height:23px;line-height:23px;font-size:12px;font-weight:bold;color:#fff;letter-spacing:-0.1px">OP_syn.1....</div>
<div style="position:absolute;left:150px;top:138px;width:310px;height:23px;line-height:23px;font-size:12px;font-weight:bold;color:#fff;letter-spacing:-0.1px">Общестроительные работы</div>
<div style="position:absolute;left:461px;top:138px;width:133px;height:23px;line-height:23px;font-size:12px;font-weight:bold;color:#fff;letter-spacing:-0.1px;text-align:center;letter-spacing:0.3px">15.10.2025 09:00</div>
<div style="position:absolute;left:597px;top:138px;width:122px;height:23px;line-height:23px;font-size:12px;font-weight:bold;color:#fff;letter-spacing:-0.1px;text-align:center;letter-spacing:0.3px">15.01.2026 18:00</div>
<div style="position:absolute;left:0px;top:162px;width:21px;height:23px;line-height:23px;font-size:11px;color:#111;text-align:center">8</div>
<div style="position:absolute;left:21px;top:161px;width:11px;height:23px;background:#183a62"></div>
<div style="position:absolute;left:32px;top:161px;width:10px;height:23px;background:#1d4a7f"></div>
<div style="position:absolute;left:42px;top:161px;width:10px;height:23px;background:#22599d"></div>
<div style="position:absolute;left:52px;top:161px;width:664px;height:23px;background:#2a69b5"></div>
<div style="position:absolute;left:53px;top:171px;width:9px;height:2px;background:#fff"></div>
<div style="position:absolute;left:64px;top:166px;width:12px;height:12px;border:1px solid #fff;border-radius:1.5px"></div>
<svg style="position:absolute;left:64px;top:166px" width="12" height="12" viewBox="0 0 12 12" fill="none" stroke="#fff" stroke-width="1.2"><path d="M3 6.2l2 2 4-4.5"/></svg>
<div style="position:absolute;left:86px;top:161px;width:57px;height:23px;line-height:23px;font-size:12px;font-weight:bold;color:#fff;letter-spacing:-0.1px">OP_syn....</div>
<div style="position:absolute;left:150px;top:161px;width:310px;height:23px;line-height:23px;font-size:12px;font-weight:bold;color:#fff;letter-spacing:-0.1px">Фундамент</div>
<div style="position:absolute;left:461px;top:161px;width:133px;height:23px;line-height:23px;font-size:12px;font-weight:bold;color:#fff;letter-spacing:-0.1px;text-align:center;letter-spacing:0.3px">15.10.2025 09:00</div>
<div style="position:absolute;left:597px;top:161px;width:122px;height:23px;line-height:23px;font-size:12px;font-weight:bold;color:#fff;letter-spacing:-0.1px;text-align:center;letter-spacing:0.3px">27.10.2025 09:00</div>
<div style="position:absolute;left:0px;top:185px;width:21px;height:23px;line-height:23px;font-size:11px;color:#111;text-align:center">9</div>
<div style="position:absolute;left:21px;top:184px;width:11px;height:23px;background:#183a62"></div>
<div style="position:absolute;left:32px;top:184px;width:10px;height:23px;background:#1d4a7f"></div>
<div style="position:absolute;left:42px;top:184px;width:10px;height:23px;background:#22599d"></div>
<div style="position:absolute;left:52px;top:184px;width:10px;height:23px;background:#2a69b5"></div>
<div style="position:absolute;left:62px;top:184px;width:654px;height:23px;background:#fff"></div>
<div style="position:absolute;left:62px;top:206px;width:654px;height:1px;background:repeating-linear-gradient(90deg,#b9b9c3 0 3px,transparent 3px 5px)"></div>
<div style="position:absolute;left:145px;top:184px;width:1px;height:23px;background:repeating-linear-gradient(180deg,#b9b9c3 0 3px,transparent 3px 5px)"></div>
<div style="position:absolute;left:461px;top:184px;width:1px;height:23px;background:repeating-linear-gradient(180deg,#b9b9c3 0 3px,transparent 3px 5px)"></div>
<div style="position:absolute;left:594px;top:184px;width:1px;height:23px;background:repeating-linear-gradient(180deg,#b9b9c3 0 3px,transparent 3px 5px)"></div>
<div style="position:absolute;left:64px;top:189px;width:12px;height:12px;border:1.3px solid #111;border-radius:1.5px;background:#fff"></div>
<div style="position:absolute;left:86px;top:184.5px;width:59px;height:23px;line-height:23px;font-size:13px;color:#1a1a1a;letter-spacing:-0.5px">02.01.01</div>
<div style="position:absolute;left:150px;top:184.5px;width:310px;height:23px;line-height:23px;font-size:13px;color:#1a1a1a;letter-spacing:-0.08px">Устройство буронабивных свай захватка 1</div>
<div style="position:absolute;left:461px;top:184.5px;width:133px;height:23px;line-height:23px;font-size:13px;color:#1a1a1a;text-align:center;letter-spacing:-0.2px">15.10.2025 09:00</div>
<div style="position:absolute;left:597px;top:184.5px;width:122px;height:23px;line-height:23px;font-size:13px;color:#1a1a1a;text-align:center;letter-spacing:-0.2px">16.10.2025 16:00</div>
<div style="position:absolute;left:0px;top:208px;width:21px;height:23px;line-height:23px;font-size:11px;color:#111;text-align:center">10</div>
<div style="position:absolute;left:21px;top:207px;width:11px;height:23px;background:#183a62"></div>
<div style="position:absolute;left:32px;top:207px;width:10px;height:23px;background:#1d4a7f"></div>
<div style="position:absolute;left:42px;top:207px;width:10px;height:23px;background:#22599d"></div>
<div style="position:absolute;left:52px;top:207px;width:10px;height:23px;background:#2a69b5"></div>
<div style="position:absolute;left:62px;top:207px;width:654px;height:23px;background:#dce8f7"></div>
<div style="position:absolute;left:62px;top:229px;width:654px;height:1px;background:repeating-linear-gradient(90deg,#b9b9c3 0 3px,transparent 3px 5px)"></div>
<div style="position:absolute;left:145px;top:207px;width:1px;height:23px;background:repeating-linear-gradient(180deg,#b9b9c3 0 3px,transparent 3px 5px)"></div>
<div style="position:absolute;left:461px;top:207px;width:1px;height:23px;background:repeating-linear-gradient(180deg,#b9b9c3 0 3px,transparent 3px 5px)"></div>
<div style="position:absolute;left:594px;top:207px;width:1px;height:23px;background:repeating-linear-gradient(180deg,#b9b9c3 0 3px,transparent 3px 5px)"></div>
<div style="position:absolute;left:64px;top:212px;width:12px;height:12px;background:#000;border-radius:1.5px"></div>
<svg style="position:absolute;left:64px;top:212px" width="12" height="12" viewBox="0 0 12 12" fill="none" stroke="#fff" stroke-width="1.6"><path d="M2.8 6.2l2.2 2.2 4.2-4.8"/></svg>
<div style="position:absolute;left:86px;top:207.5px;width:59px;height:23px;line-height:23px;font-size:13px;color:#1a1a1a;letter-spacing:-0.5px">02.01.02</div>
<div style="position:absolute;left:150px;top:207.5px;width:310px;height:23px;line-height:23px;font-size:13px;color:#1a1a1a;letter-spacing:-0.08px">Устройство буронабивных свай захватка 2</div>
<div style="position:absolute;left:461px;top:207.5px;width:133px;height:23px;line-height:23px;font-size:13px;color:#1a1a1a;text-align:center;letter-spacing:-0.2px">17.10.2025 09:00</div>
<div style="position:absolute;left:597px;top:207.5px;width:122px;height:23px;line-height:23px;font-size:13px;color:#1a1a1a;text-align:center;letter-spacing:-0.2px">22.10.2025 09:00</div>
<div style="position:absolute;left:0px;top:231px;width:21px;height:23px;line-height:23px;font-size:11px;color:#111;text-align:center">11</div>
<div style="position:absolute;left:21px;top:230px;width:11px;height:23px;background:#183a62"></div>
<div style="position:absolute;left:32px;top:230px;width:10px;height:23px;background:#1d4a7f"></div>
<div style="position:absolute;left:42px;top:230px;width:10px;height:23px;background:#22599d"></div>
<div style="position:absolute;left:52px;top:230px;width:10px;height:23px;background:#2a69b5"></div>
<div style="position:absolute;left:62px;top:230px;width:654px;height:23px;background:#fff"></div>
<div style="position:absolute;left:62px;top:252px;width:654px;height:1px;background:repeating-linear-gradient(90deg,#b9b9c3 0 3px,transparent 3px 5px)"></div>
<div style="position:absolute;left:145px;top:230px;width:1px;height:23px;background:repeating-linear-gradient(180deg,#b9b9c3 0 3px,transparent 3px 5px)"></div>
<div style="position:absolute;left:461px;top:230px;width:1px;height:23px;background:repeating-linear-gradient(180deg,#b9b9c3 0 3px,transparent 3px 5px)"></div>
<div style="position:absolute;left:594px;top:230px;width:1px;height:23px;background:repeating-linear-gradient(180deg,#b9b9c3 0 3px,transparent 3px 5px)"></div>
<div style="position:absolute;left:64px;top:235px;width:12px;height:12px;border:1.3px solid #111;border-radius:1.5px;background:#fff"></div>
<div style="position:absolute;left:86px;top:230.5px;width:59px;height:23px;line-height:23px;font-size:13px;color:#1a1a1a;letter-spacing:-0.5px">02.01.03</div>
<div style="position:absolute;left:150px;top:230.5px;width:310px;height:23px;line-height:23px;font-size:13px;color:#1a1a1a;letter-spacing:-0.08px">Устройство буронабивных свай захватка 3</div>
<div style="position:absolute;left:461px;top:230.5px;width:133px;height:23px;line-height:23px;font-size:13px;color:#1a1a1a;text-align:center;letter-spacing:-0.2px">19.10.2025 09:00</div>
<div style="position:absolute;left:597px;top:230.5px;width:122px;height:23px;line-height:23px;font-size:13px;color:#1a1a1a;text-align:center;letter-spacing:-0.2px">20.10.2025 16:00</div>
<div style="position:absolute;left:0px;top:254px;width:21px;height:23px;line-height:23px;font-size:11px;color:#111;text-align:center">12</div>
<div style="position:absolute;left:21px;top:253px;width:11px;height:23px;background:#183a62"></div>
<div style="position:absolute;left:32px;top:253px;width:10px;height:23px;background:#1d4a7f"></div>
<div style="position:absolute;left:42px;top:253px;width:10px;height:23px;background:#22599d"></div>
<div style="position:absolute;left:52px;top:253px;width:10px;height:23px;background:#2a69b5"></div>
<div style="position:absolute;left:62px;top:253px;width:654px;height:23px;background:#fff"></div>
<div style="position:absolute;left:62px;top:275px;width:654px;height:1px;background:repeating-linear-gradient(90deg,#b9b9c3 0 3px,transparent 3px 5px)"></div>
<div style="position:absolute;left:145px;top:253px;width:1px;height:23px;background:repeating-linear-gradient(180deg,#b9b9c3 0 3px,transparent 3px 5px)"></div>
<div style="position:absolute;left:461px;top:253px;width:1px;height:23px;background:repeating-linear-gradient(180deg,#b9b9c3 0 3px,transparent 3px 5px)"></div>
<div style="position:absolute;left:594px;top:253px;width:1px;height:23px;background:repeating-linear-gradient(180deg,#b9b9c3 0 3px,transparent 3px 5px)"></div>
<div style="position:absolute;left:64px;top:258px;width:12px;height:12px;border:1.3px solid #111;border-radius:1.5px;background:#fff"></div>
<div style="position:absolute;left:86px;top:253.5px;width:59px;height:23px;line-height:23px;font-size:13px;color:#1a1a1a;letter-spacing:-0.5px">02.01.04</div>
<div style="position:absolute;left:150px;top:253.5px;width:310px;height:23px;line-height:23px;font-size:13px;color:#1a1a1a;letter-spacing:-0.08px">Устройство буронабивных свай захватка 4</div>
<div style="position:absolute;left:461px;top:253.5px;width:133px;height:23px;line-height:23px;font-size:13px;color:#1a1a1a;text-align:center;letter-spacing:-0.2px">21.10.2025 09:00</div>
<div style="position:absolute;left:597px;top:253.5px;width:122px;height:23px;line-height:23px;font-size:13px;color:#1a1a1a;text-align:center;letter-spacing:-0.2px">22.10.2025 16:00</div>
<div style="position:absolute;left:0px;top:277px;width:21px;height:23px;line-height:23px;font-size:11px;color:#111;text-align:center">13</div>
<div style="position:absolute;left:21px;top:276px;width:11px;height:23px;background:#183a62"></div>
<div style="position:absolute;left:32px;top:276px;width:10px;height:23px;background:#1d4a7f"></div>
<div style="position:absolute;left:42px;top:276px;width:10px;height:23px;background:#22599d"></div>
<div style="position:absolute;left:52px;top:276px;width:10px;height:23px;background:#2a69b5"></div>
<div style="position:absolute;left:62px;top:276px;width:654px;height:23px;background:#fff"></div>
<div style="position:absolute;left:62px;top:298px;width:654px;height:1px;background:repeating-linear-gradient(90deg,#b9b9c3 0 3px,transparent 3px 5px)"></div>
<div style="position:absolute;left:145px;top:276px;width:1px;height:23px;background:repeating-linear-gradient(180deg,#b9b9c3 0 3px,transparent 3px 5px)"></div>
<div style="position:absolute;left:461px;top:276px;width:1px;height:23px;background:repeating-linear-gradient(180deg,#b9b9c3 0 3px,transparent 3px 5px)"></div>
<div style="position:absolute;left:594px;top:276px;width:1px;height:23px;background:repeating-linear-gradient(180deg,#b9b9c3 0 3px,transparent 3px 5px)"></div>
<div style="position:absolute;left:64px;top:281px;width:12px;height:12px;border:1.3px solid #111;border-radius:1.5px;background:#fff"></div>
<div style="position:absolute;left:86px;top:276.5px;width:59px;height:23px;line-height:23px;font-size:13px;color:#1a1a1a;letter-spacing:-0.5px">02.01.05</div>
<div style="position:absolute;left:150px;top:276.5px;width:310px;height:23px;line-height:23px;font-size:13px;color:#1a1a1a;letter-spacing:-0.08px">Устройство фундаментной плиты</div>
<div style="position:absolute;left:461px;top:276.5px;width:133px;height:23px;line-height:23px;font-size:13px;color:#1a1a1a;text-align:center;letter-spacing:-0.2px">23.10.2025 09:00</div>
<div style="position:absolute;left:597px;top:276.5px;width:122px;height:23px;line-height:23px;font-size:13px;color:#1a1a1a;text-align:center;letter-spacing:-0.2px">27.10.2025 09:00</div>
<div style="position:absolute;left:0px;top:300px;width:21px;height:23px;line-height:23px;font-size:11px;color:#111;text-align:center">14</div>
<div style="position:absolute;left:21px;top:299px;width:11px;height:23px;background:#183a62"></div>
<div style="position:absolute;left:32px;top:299px;width:10px;height:23px;background:#1d4a7f"></div>
<div style="position:absolute;left:42px;top:299px;width:10px;height:23px;background:#22599d"></div>
<div style="position:absolute;left:52px;top:299px;width:664px;height:23px;background:#2a69b5"></div>
<div style="position:absolute;left:53px;top:309px;width:9px;height:2px;background:#fff"></div>
<div style="position:absolute;left:64px;top:304px;width:12px;height:12px;border:1px solid #fff;border-radius:1.5px"></div>
<div style="position:absolute;left:86px;top:299px;width:57px;height:23px;line-height:23px;font-size:12px;font-weight:bold;color:#fff;letter-spacing:-0.1px">OP_syn....</div>
<div style="position:absolute;left:150px;top:299px;width:310px;height:23px;line-height:23px;font-size:12px;font-weight:bold;color:#fff;letter-spacing:-0.1px">Монолитные работы подземной части</div>
<div style="position:absolute;left:461px;top:299px;width:133px;height:23px;line-height:23px;font-size:12px;font-weight:bold;color:#fff;letter-spacing:-0.1px;text-align:center;letter-spacing:0.3px">28.10.2025 09:00</div>
<div style="position:absolute;left:597px;top:299px;width:122px;height:23px;line-height:23px;font-size:12px;font-weight:bold;color:#fff;letter-spacing:-0.1px;text-align:center;letter-spacing:0.3px">07.11.2025 18:00</div>
<div style="position:absolute;left:0px;top:323px;width:21px;height:23px;line-height:23px;font-size:11px;color:#111;text-align:center">15</div>
<div style="position:absolute;left:21px;top:322px;width:11px;height:23px;background:#183a62"></div>
<div style="position:absolute;left:32px;top:322px;width:10px;height:23px;background:#1d4a7f"></div>
<div style="position:absolute;left:42px;top:322px;width:10px;height:23px;background:#22599d"></div>
<div style="position:absolute;left:52px;top:322px;width:10px;height:23px;background:#2a69b5"></div>
<div style="position:absolute;left:62px;top:322px;width:654px;height:23px;background:#fff"></div>
<div style="position:absolute;left:62px;top:344px;width:654px;height:1px;background:repeating-linear-gradient(90deg,#b9b9c3 0 3px,transparent 3px 5px)"></div>
<div style="position:absolute;left:145px;top:322px;width:1px;height:23px;background:repeating-linear-gradient(180deg,#b9b9c3 0 3px,transparent 3px 5px)"></div>
<div style="position:absolute;left:461px;top:322px;width:1px;height:23px;background:repeating-linear-gradient(180deg,#b9b9c3 0 3px,transparent 3px 5px)"></div>
<div style="position:absolute;left:594px;top:322px;width:1px;height:23px;background:repeating-linear-gradient(180deg,#b9b9c3 0 3px,transparent 3px 5px)"></div>
<div style="position:absolute;left:64px;top:327px;width:12px;height:12px;border:1.3px solid #111;border-radius:1.5px;background:#fff"></div>
<div style="position:absolute;left:86px;top:322.5px;width:59px;height:23px;line-height:23px;font-size:13px;color:#1a1a1a;letter-spacing:-0.5px">02.02.01</div>
<div style="position:absolute;left:150px;top:322.5px;width:310px;height:23px;line-height:23px;font-size:13px;color:#1a1a1a;letter-spacing:-0.08px">Устройство монолитных стен цокольного этажа</div>
<div style="position:absolute;left:461px;top:322.5px;width:133px;height:23px;line-height:23px;font-size:13px;color:#1a1a1a;text-align:center;letter-spacing:-0.2px">28.10.2025 09:00</div>
<div style="position:absolute;left:597px;top:322.5px;width:122px;height:23px;line-height:23px;font-size:13px;color:#1a1a1a;text-align:center;letter-spacing:-0.2px">29.10.2025 18:00</div>
<div style="position:absolute;left:0px;top:346px;width:21px;height:23px;line-height:23px;font-size:11px;color:#111;text-align:center">16</div>
<div style="position:absolute;left:21px;top:345px;width:11px;height:23px;background:#183a62"></div>
<div style="position:absolute;left:32px;top:345px;width:10px;height:23px;background:#1d4a7f"></div>
<div style="position:absolute;left:42px;top:345px;width:10px;height:23px;background:#22599d"></div>
<div style="position:absolute;left:52px;top:345px;width:10px;height:23px;background:#2a69b5"></div>
<div style="position:absolute;left:62px;top:345px;width:654px;height:23px;background:#fff"></div>
<div style="position:absolute;left:62px;top:367px;width:654px;height:1px;background:repeating-linear-gradient(90deg,#b9b9c3 0 3px,transparent 3px 5px)"></div>
<div style="position:absolute;left:145px;top:345px;width:1px;height:23px;background:repeating-linear-gradient(180deg,#b9b9c3 0 3px,transparent 3px 5px)"></div>
<div style="position:absolute;left:461px;top:345px;width:1px;height:23px;background:repeating-linear-gradient(180deg,#b9b9c3 0 3px,transparent 3px 5px)"></div>
<div style="position:absolute;left:594px;top:345px;width:1px;height:23px;background:repeating-linear-gradient(180deg,#b9b9c3 0 3px,transparent 3px 5px)"></div>
<div style="position:absolute;left:64px;top:350px;width:12px;height:12px;border:1.3px solid #111;border-radius:1.5px;background:#fff"></div>
<div style="position:absolute;left:86px;top:345.5px;width:59px;height:23px;line-height:23px;font-size:13px;color:#1a1a1a;letter-spacing:-0.5px">02.02.02</div>
<div style="position:absolute;left:150px;top:345.5px;width:310px;height:23px;line-height:23px;font-size:13px;color:#1a1a1a;letter-spacing:-0.08px">Устройство монолитного перекрытия цокольног...</div>
<div style="position:absolute;left:461px;top:345.5px;width:133px;height:23px;line-height:23px;font-size:13px;color:#1a1a1a;text-align:center;letter-spacing:-0.2px">30.10.2025 09:00</div>
<div style="position:absolute;left:597px;top:345.5px;width:122px;height:23px;line-height:23px;font-size:13px;color:#1a1a1a;text-align:center;letter-spacing:-0.2px">03.11.2025 18:00</div>
<div style="position:absolute;left:0px;top:369px;width:21px;height:23px;line-height:23px;font-size:11px;color:#111;text-align:center">17</div>
<div style="position:absolute;left:21px;top:368px;width:11px;height:23px;background:#183a62"></div>
<div style="position:absolute;left:32px;top:368px;width:10px;height:23px;background:#1d4a7f"></div>
<div style="position:absolute;left:42px;top:368px;width:10px;height:23px;background:#22599d"></div>
<div style="position:absolute;left:52px;top:368px;width:10px;height:23px;background:#2a69b5"></div>
<div style="position:absolute;left:62px;top:368px;width:654px;height:23px;background:#fff"></div>
<div style="position:absolute;left:62px;top:390px;width:654px;height:1px;background:repeating-linear-gradient(90deg,#b9b9c3 0 3px,transparent 3px 5px)"></div>
<div style="position:absolute;left:145px;top:368px;width:1px;height:23px;background:repeating-linear-gradient(180deg,#b9b9c3 0 3px,transparent 3px 5px)"></div>
<div style="position:absolute;left:461px;top:368px;width:1px;height:23px;background:repeating-linear-gradient(180deg,#b9b9c3 0 3px,transparent 3px 5px)"></div>
<div style="position:absolute;left:594px;top:368px;width:1px;height:23px;background:repeating-linear-gradient(180deg,#b9b9c3 0 3px,transparent 3px 5px)"></div>
<div style="position:absolute;left:64px;top:373px;width:12px;height:12px;border:1.3px solid #111;border-radius:1.5px;background:#fff"></div>
<div style="position:absolute;left:86px;top:368.5px;width:59px;height:23px;line-height:23px;font-size:13px;color:#1a1a1a;letter-spacing:-0.5px">02.02.03</div>
<div style="position:absolute;left:150px;top:368.5px;width:310px;height:23px;line-height:23px;font-size:13px;color:#1a1a1a;letter-spacing:-0.08px">Устройство монолитной входной лестницы</div>
<div style="position:absolute;left:461px;top:368.5px;width:133px;height:23px;line-height:23px;font-size:13px;color:#1a1a1a;text-align:center;letter-spacing:-0.2px">06.11.2025 09:00</div>
<div style="position:absolute;left:597px;top:368.5px;width:122px;height:23px;line-height:23px;font-size:13px;color:#1a1a1a;text-align:center;letter-spacing:-0.2px">07.11.2025 18:00</div>
<div style="position:absolute;left:0px;top:392px;width:21px;height:23px;line-height:23px;font-size:11px;color:#111;text-align:center">18</div>
<div style="position:absolute;left:21px;top:391px;width:11px;height:23px;background:#183a62"></div>
<div style="position:absolute;left:32px;top:391px;width:10px;height:23px;background:#1d4a7f"></div>
<div style="position:absolute;left:42px;top:391px;width:10px;height:23px;background:#22599d"></div>
<div style="position:absolute;left:52px;top:391px;width:664px;height:23px;background:#2a69b5"></div>
<div style="position:absolute;left:53px;top:401px;width:9px;height:2px;background:#fff"></div>
<div style="position:absolute;left:64px;top:396px;width:12px;height:12px;border:1px solid #fff;border-radius:1.5px"></div>
<div style="position:absolute;left:86px;top:391px;width:57px;height:23px;line-height:23px;font-size:12px;font-weight:bold;color:#fff;letter-spacing:-0.1px">OP_syn....</div>
<div style="position:absolute;left:150px;top:391px;width:310px;height:23px;line-height:23px;font-size:12px;font-weight:bold;color:#fff;letter-spacing:-0.1px">Монолитные работы надземной части</div>
<div style="position:absolute;left:461px;top:391px;width:133px;height:23px;line-height:23px;font-size:12px;font-weight:bold;color:#fff;letter-spacing:-0.1px;text-align:center;letter-spacing:0.3px">04.11.2025 09:00</div>
<div style="position:absolute;left:597px;top:391px;width:122px;height:23px;line-height:23px;font-size:12px;font-weight:bold;color:#fff;letter-spacing:-0.1px;text-align:center;letter-spacing:0.3px">30.11.2025 18:00</div>
<div style="position:absolute;left:0px;top:415px;width:21px;height:23px;line-height:23px;font-size:11px;color:#111;text-align:center">19</div>
<div style="position:absolute;left:21px;top:414px;width:11px;height:23px;background:#183a62"></div>
<div style="position:absolute;left:32px;top:414px;width:10px;height:23px;background:#1d4a7f"></div>
<div style="position:absolute;left:42px;top:414px;width:10px;height:23px;background:#22599d"></div>
<div style="position:absolute;left:52px;top:414px;width:10px;height:23px;background:#2a69b5"></div>
<div style="position:absolute;left:62px;top:414px;width:654px;height:23px;background:#fff"></div>
<div style="position:absolute;left:62px;top:436px;width:654px;height:1px;background:repeating-linear-gradient(90deg,#b9b9c3 0 3px,transparent 3px 5px)"></div>
<div style="position:absolute;left:145px;top:414px;width:1px;height:23px;background:repeating-linear-gradient(180deg,#b9b9c3 0 3px,transparent 3px 5px)"></div>
<div style="position:absolute;left:461px;top:414px;width:1px;height:23px;background:repeating-linear-gradient(180deg,#b9b9c3 0 3px,transparent 3px 5px)"></div>
<div style="position:absolute;left:594px;top:414px;width:1px;height:23px;background:repeating-linear-gradient(180deg,#b9b9c3 0 3px,transparent 3px 5px)"></div>
<div style="position:absolute;left:64px;top:419px;width:12px;height:12px;border:1.3px solid #111;border-radius:1.5px;background:#fff"></div>
<div style="position:absolute;left:86px;top:414.5px;width:59px;height:23px;line-height:23px;font-size:13px;color:#1a1a1a;letter-spacing:-0.5px">02.03.01</div>
<div style="position:absolute;left:150px;top:414.5px;width:310px;height:23px;line-height:23px;font-size:13px;color:#1a1a1a;letter-spacing:-0.08px">Устройство наружных монолитных стен 1-го этажа</div>
<div style="position:absolute;left:461px;top:414.5px;width:133px;height:23px;line-height:23px;font-size:13px;color:#1a1a1a;text-align:center;letter-spacing:-0.2px">04.11.2025 09:00</div>
<div style="position:absolute;left:597px;top:414.5px;width:122px;height:23px;line-height:23px;font-size:13px;color:#1a1a1a;text-align:center;letter-spacing:-0.2px">05.11.2025 11:00</div>
<div style="position:absolute;left:0px;top:438px;width:21px;height:23px;line-height:23px;font-size:11px;color:#111;text-align:center">20</div>
<div style="position:absolute;left:21px;top:437px;width:11px;height:23px;background:#183a62"></div>
<div style="position:absolute;left:32px;top:437px;width:10px;height:23px;background:#1d4a7f"></div>
<div style="position:absolute;left:42px;top:437px;width:10px;height:23px;background:#22599d"></div>
<div style="position:absolute;left:52px;top:437px;width:10px;height:23px;background:#2a69b5"></div>
<div style="position:absolute;left:62px;top:437px;width:654px;height:23px;background:#fff"></div>
<div style="position:absolute;left:62px;top:459px;width:654px;height:1px;background:repeating-linear-gradient(90deg,#b9b9c3 0 3px,transparent 3px 5px)"></div>
<div style="position:absolute;left:145px;top:437px;width:1px;height:23px;background:repeating-linear-gradient(180deg,#b9b9c3 0 3px,transparent 3px 5px)"></div>
<div style="position:absolute;left:461px;top:437px;width:1px;height:23px;background:repeating-linear-gradient(180deg,#b9b9c3 0 3px,transparent 3px 5px)"></div>
<div style="position:absolute;left:594px;top:437px;width:1px;height:23px;background:repeating-linear-gradient(180deg,#b9b9c3 0 3px,transparent 3px 5px)"></div>
<div style="position:absolute;left:64px;top:442px;width:12px;height:12px;border:1.3px solid #111;border-radius:1.5px;background:#fff"></div>
<div style="position:absolute;left:86px;top:437.5px;width:59px;height:23px;line-height:23px;font-size:13px;color:#1a1a1a;letter-spacing:-0.5px">02.03.02</div>
<div style="position:absolute;left:150px;top:437.5px;width:310px;height:23px;line-height:23px;font-size:13px;color:#1a1a1a;letter-spacing:-0.08px">Устройство внутренних монолитных стен 1-го ...</div>
<div style="position:absolute;left:461px;top:437.5px;width:133px;height:23px;line-height:23px;font-size:13px;color:#1a1a1a;text-align:center;letter-spacing:-0.2px">04.11.2025 09:00</div>
<div style="position:absolute;left:597px;top:437.5px;width:122px;height:23px;line-height:23px;font-size:13px;color:#1a1a1a;text-align:center;letter-spacing:-0.2px">05.11.2025 18:00</div>
</div>
<div style="position:absolute;left:761px;top:89px;width:12px;height:53px;background:#d9d9dc;border-radius:3px"></div>
<div style="position:absolute;left:45px;top:588px;width:716px;height:13px;background:#f0f0f3"></div>
<div style="position:absolute;left:45px;top:589px;width:635px;height:11px;background:#dcdcdf;border-radius:5px"></div>
<div style="position:absolute;left:779px;top:89px;width:1139px;height:511px;background:#fff"></div>
<div style="position:absolute;left:779px;top:113px;width:890px;height:1px;background:#d6d6da"></div>
<div style="position:absolute;left:779px;top:138px;width:1131px;height:1px;background:#d6d6da"></div>
<div style="position:absolute;left:779px;top:90px;width:269px;height:23px;line-height:23px;font-size:12px;color:#222;text-align:center;letter-spacing:-0.33px">01.08.2025</div>
<div style="position:absolute;left:779px;top:115px;width:90px;height:25px;line-height:25px;font-size:12px;color:#222;text-align:center;letter-spacing:-0.33px">Согл.план</div>
<div style="position:absolute;left:869px;top:115px;width:90px;height:25px;line-height:25px;font-size:12px;color:#222;text-align:center;letter-spacing:-0.33px">Опер.план</div>
<div style="position:absolute;left:868px;top:114px;width:1px;height:24px;background:repeating-linear-gradient(180deg,#b9b9c3 0 3px,transparent 3px 5px)"></div>
<div style="position:absolute;left:959px;top:115px;width:90px;height:25px;line-height:25px;font-size:12px;color:#222;text-align:center;letter-spacing:-0.33px">Факт</div>
<div style="position:absolute;left:958px;top:114px;width:1px;height:24px;background:repeating-linear-gradient(180deg,#b9b9c3 0 3px,transparent 3px 5px)"></div>
<div style="position:absolute;left:1048px;top:88px;width:1px;height:512px;background:#d0d0d4"></div>
<div style="position:absolute;left:1049px;top:90px;width:269px;height:23px;line-height:23px;font-size:12px;color:#222;text-align:center;letter-spacing:-0.33px">02.08.2025</div>
<div style="position:absolute;left:1049px;top:115px;width:90px;height:25px;line-height:25px;font-size:12px;color:#222;text-align:center;letter-spacing:-0.33px">Согл.план</div>
<div style="position:absolute;left:1139px;top:115px;width:90px;height:25px;line-height:25px;font-size:12px;color:#222;text-align:center;letter-spacing:-0.33px">Опер.план</div>
<div style="position:absolute;left:1138px;top:114px;width:1px;height:24px;background:repeating-linear-gradient(180deg,#b9b9c3 0 3px,transparent 3px 5px)"></div>
<div style="position:absolute;left:1229px;top:115px;width:90px;height:25px;line-height:25px;font-size:12px;color:#222;text-align:center;letter-spacing:-0.33px">Факт</div>
<div style="position:absolute;left:1228px;top:114px;width:1px;height:24px;background:repeating-linear-gradient(180deg,#b9b9c3 0 3px,transparent 3px 5px)"></div>
<div style="position:absolute;left:1318px;top:88px;width:1px;height:512px;background:#d0d0d4"></div>
<div style="position:absolute;left:1319px;top:90px;width:269px;height:23px;line-height:23px;font-size:12px;color:#222;text-align:center;letter-spacing:-0.33px">03.08.2025</div>
<div style="position:absolute;left:1319px;top:115px;width:90px;height:25px;line-height:25px;font-size:12px;color:#222;text-align:center;letter-spacing:-0.33px">Согл.план</div>
<div style="position:absolute;left:1409px;top:115px;width:90px;height:25px;line-height:25px;font-size:12px;color:#222;text-align:center;letter-spacing:-0.33px">Опер.план</div>
<div style="position:absolute;left:1408px;top:114px;width:1px;height:24px;background:repeating-linear-gradient(180deg,#b9b9c3 0 3px,transparent 3px 5px)"></div>
<div style="position:absolute;left:1499px;top:115px;width:90px;height:25px;line-height:25px;font-size:12px;color:#222;text-align:center;letter-spacing:-0.33px">Факт</div>
<div style="position:absolute;left:1498px;top:114px;width:1px;height:24px;background:repeating-linear-gradient(180deg,#b9b9c3 0 3px,transparent 3px 5px)"></div>
<div style="position:absolute;left:1588px;top:88px;width:1px;height:512px;background:#d0d0d4"></div>
<div style="position:absolute;left:1589px;top:90px;width:269px;height:23px;line-height:23px;font-size:12px;color:#222;text-align:center;letter-spacing:-0.33px">04.08.2025</div>
<div style="position:absolute;left:1589px;top:115px;width:90px;height:25px;line-height:25px;font-size:12px;color:#222;text-align:center;letter-spacing:-0.33px">Согл.план</div>
<div style="position:absolute;left:1679px;top:115px;width:90px;height:25px;line-height:25px;font-size:12px;color:#222;text-align:center;letter-spacing:-0.33px">Опер.план</div>
<div style="position:absolute;left:1678px;top:114px;width:1px;height:24px;background:repeating-linear-gradient(180deg,#b9b9c3 0 3px,transparent 3px 5px)"></div>
<div style="position:absolute;left:1769px;top:115px;width:90px;height:25px;line-height:25px;font-size:12px;color:#222;text-align:center;letter-spacing:-0.33px">Факт</div>
<div style="position:absolute;left:1768px;top:114px;width:1px;height:24px;background:repeating-linear-gradient(180deg,#b9b9c3 0 3px,transparent 3px 5px)"></div>
<div style="position:absolute;left:1669px;top:89px;width:249px;height:511px;background:#fff"></div>
<div style="position:absolute;left:1669px;top:88px;width:1px;height:499px;background:#c8c8cc"></div>
<div style="position:absolute;left:1669px;top:113px;width:241px;height:1px;background:#d6d6da"></div>
<div style="position:absolute;left:1669px;top:91px;width:240px;height:23px;line-height:23px;font-size:12px;color:#222;text-align:center;letter-spacing:-0.33px">Суммарно</div>
<svg style="position:absolute;left:1687px;top:93px" width="12" height="18" viewBox="0 0 12 18" fill="none" stroke="#333" stroke-width="1.6"><path d="M10 1L3 9l7 8"/></svg>
<svg style="position:absolute;left:1879px;top:93px" width="12" height="18" viewBox="0 0 12 18" fill="none" stroke="#333" stroke-width="1.6"><path d="M2 1l7 8-7 8"/></svg>
<div style="position:absolute;left:1669px;top:115px;width:80px;height:25px;line-height:25px;font-size:12px;color:#222;text-align:center;letter-spacing:-0.33px">Согл.план</div>
<div style="position:absolute;left:1749px;top:115px;width:80px;height:25px;line-height:25px;font-size:12px;color:#222;text-align:center;letter-spacing:-0.33px">Опер.план</div>
<div style="position:absolute;left:1749px;top:114px;width:1px;height:24px;background:repeating-linear-gradient(180deg,#b9b9c3 0 3px,transparent 3px 5px)"></div>
<div style="position:absolute;left:1829px;top:115px;width:80px;height:25px;line-height:25px;font-size:12px;color:#222;text-align:center;letter-spacing:-0.33px">Факт</div>
<div style="position:absolute;left:1829px;top:114px;width:1px;height:24px;background:repeating-linear-gradient(180deg,#b9b9c3 0 3px,transparent 3px 5px)"></div>
<div style="position:absolute;left:1909px;top:113px;width:1px;height:26px;background:#d0d0d4"></div>
<div style="position:absolute;left:1910px;top:88px;width:8px;height:512px;background:#f0f0f3"></div>
<div style="position:absolute;left:1911px;top:90px;width:7px;height:52px;background:#d9d9dc;border-radius:3px"></div>
<div style="position:absolute;left:779px;top:139px;width:1131px;height:449px;overflow:hidden">
<div style="position:absolute;left:0px;top:0px;width:1131px;height:23px;background:#183a62"></div>
<div style="position:absolute;left:890px;top:-2px;width:80px;height:23px;line-height:23px;font-size:12px;color:#fff;text-align:center;letter-spacing:-0.38px">2 492</div>
<div style="position:absolute;left:970px;top:-2px;width:80px;height:23px;line-height:23px;font-size:12px;color:#fff;text-align:center;letter-spacing:-0.38px">2 492</div>
<div style="position:absolute;left:1050px;top:-2px;width:80px;height:23px;line-height:23px;font-size:12px;color:#fff;text-align:center;letter-spacing:-0.38px">2 492</div>
<div style="position:absolute;left:890px;top:0px;width:1px;height:23px;background:rgba(255,255,255,.45)"></div>
<div style="position:absolute;left:0px;top:23px;width:1131px;height:23px;background:#1d4a7f"></div>
<div style="position:absolute;left:890px;top:21px;width:80px;height:23px;line-height:23px;font-size:12px;color:#fff;text-align:center;letter-spacing:-0.38px">2 492</div>
<div style="position:absolute;left:970px;top:21px;width:80px;height:23px;line-height:23px;font-size:12px;color:#fff;text-align:center;letter-spacing:-0.38px">2 492</div>
<div style="position:absolute;left:1050px;top:21px;width:80px;height:23px;line-height:23px;font-size:12px;color:#fff;text-align:center;letter-spacing:-0.38px">2 492</div>
<div style="position:absolute;left:890px;top:23px;width:1px;height:23px;background:rgba(255,255,255,.45)"></div>
<div style="position:absolute;left:0px;top:46px;width:1131px;height:23px;background:#22599d"></div>
<div style="position:absolute;left:890px;top:44px;width:80px;height:23px;line-height:23px;font-size:12px;color:#fff;text-align:center;letter-spacing:-0.38px">909</div>
<div style="position:absolute;left:970px;top:44px;width:80px;height:23px;line-height:23px;font-size:12px;color:#fff;text-align:center;letter-spacing:-0.38px">909</div>
<div style="position:absolute;left:1050px;top:44px;width:80px;height:23px;line-height:23px;font-size:12px;color:#fff;text-align:center;letter-spacing:-0.38px">909</div>
<div style="position:absolute;left:890px;top:46px;width:1px;height:23px;background:rgba(255,255,255,.45)"></div>
<div style="position:absolute;left:0px;top:69px;width:890px;height:23px;background:#fff"></div>
<div style="position:absolute;left:890px;top:69px;width:241px;height:23px;background:#f4f4f5"></div>
<div style="position:absolute;left:0px;top:91px;width:1131px;height:1px;background:repeating-linear-gradient(90deg,#b9b9c3 0 3px,transparent 3px 5px)"></div>
<div style="position:absolute;left:89px;top:69px;width:1px;height:23px;background:repeating-linear-gradient(180deg,#b9b9c3 0 3px,transparent 3px 5px)"></div>
<div style="position:absolute;left:179px;top:69px;width:1px;height:23px;background:repeating-linear-gradient(180deg,#b9b9c3 0 3px,transparent 3px 5px)"></div>
<div style="position:absolute;left:269px;top:69px;width:1px;height:23px;background:#d0d0d4"></div>
<div style="position:absolute;left:359px;top:69px;width:1px;height:23px;background:repeating-linear-gradient(180deg,#b9b9c3 0 3px,transparent 3px 5px)"></div>
<div style="position:absolute;left:449px;top:69px;width:1px;height:23px;background:repeating-linear-gradient(180deg,#b9b9c3 0 3px,transparent 3px 5px)"></div>
<div style="position:absolute;left:539px;top:69px;width:1px;height:23px;background:#d0d0d4"></div>
<div style="position:absolute;left:629px;top:69px;width:1px;height:23px;background:repeating-linear-gradient(180deg,#b9b9c3 0 3px,transparent 3px 5px)"></div>
<div style="position:absolute;left:719px;top:69px;width:1px;height:23px;background:repeating-linear-gradient(180deg,#b9b9c3 0 3px,transparent 3px 5px)"></div>
<div style="position:absolute;left:809px;top:69px;width:1px;height:23px;background:#d0d0d4"></div>
<div style="position:absolute;left:890px;top:69px;width:1px;height:23px;background:#c8c8cc"></div>
<div style="position:absolute;left:970px;top:69px;width:1px;height:23px;background:repeating-linear-gradient(180deg,#b9b9c3 0 3px,transparent 3px 5px)"></div>
<div style="position:absolute;left:1050px;top:69px;width:1px;height:23px;background:repeating-linear-gradient(180deg,#b9b9c3 0 3px,transparent 3px 5px)"></div>
<div style="position:absolute;left:890px;top:67px;width:80px;height:23px;line-height:23px;font-size:12px;color:#222;text-align:center;letter-spacing:-0.33px">134</div>
<div style="position:absolute;left:970px;top:67px;width:80px;height:23px;line-height:23px;font-size:12px;color:#222;text-align:center;letter-spacing:-0.33px">134</div>
<div style="position:absolute;left:1050px;top:67px;width:80px;height:23px;line-height:23px;font-size:12px;color:#222;text-align:center;letter-spacing:-0.33px">134</div>
<div style="position:absolute;left:0px;top:92px;width:890px;height:23px;background:#fff"></div>
<div style="position:absolute;left:890px;top:92px;width:241px;height:23px;background:#f4f4f5"></div>
<div style="position:absolute;left:0px;top:114px;width:1131px;height:1px;background:repeating-linear-gradient(90deg,#b9b9c3 0 3px,transparent 3px 5px)"></div>
<div style="position:absolute;left:89px;top:92px;width:1px;height:23px;background:repeating-linear-gradient(180deg,#b9b9c3 0 3px,transparent 3px 5px)"></div>
<div style="position:absolute;left:179px;top:92px;width:1px;height:23px;background:repeating-linear-gradient(180deg,#b9b9c3 0 3px,transparent 3px 5px)"></div>
<div style="position:absolute;left:269px;top:92px;width:1px;height:23px;background:#d0d0d4"></div>
<div style="position:absolute;left:359px;top:92px;width:1px;height:23px;background:repeating-linear-gradient(180deg,#b9b9c3 0 3px,transparent 3px 5px)"></div>
<div style="position:absolute;left:449px;top:92px;width:1px;height:23px;background:repeating-linear-gradient(180deg,#b9b9c3 0 3px,transparent 3px 5px)"></div>
<div style="position:absolute;left:539px;top:92px;width:1px;height:23px;background:#d0d0d4"></div>
<div style="position:absolute;left:629px;top:92px;width:1px;height:23px;background:repeating-linear-gradient(180deg,#b9b9c3 0 3px,transparent 3px 5px)"></div>
<div style="position:absolute;left:719px;top:92px;width:1px;height:23px;background:repeating-linear-gradient(180deg,#b9b9c3 0 3px,transparent 3px 5px)"></div>
<div style="position:absolute;left:809px;top:92px;width:1px;height:23px;background:#d0d0d4"></div>
<div style="position:absolute;left:890px;top:92px;width:1px;height:23px;background:#c8c8cc"></div>
<div style="position:absolute;left:970px;top:92px;width:1px;height:23px;background:repeating-linear-gradient(180deg,#b9b9c3 0 3px,transparent 3px 5px)"></div>
<div style="position:absolute;left:1050px;top:92px;width:1px;height:23px;background:repeating-linear-gradient(180deg,#b9b9c3 0 3px,transparent 3px 5px)"></div>
<div style="position:absolute;left:890px;top:90px;width:80px;height:23px;line-height:23px;font-size:12px;color:#222;text-align:center;letter-spacing:-0.33px">234</div>
<div style="position:absolute;left:970px;top:90px;width:80px;height:23px;line-height:23px;font-size:12px;color:#222;text-align:center;letter-spacing:-0.33px">234</div>
<div style="position:absolute;left:1050px;top:90px;width:80px;height:23px;line-height:23px;font-size:12px;color:#222;text-align:center;letter-spacing:-0.33px">234</div>
<div style="position:absolute;left:0px;top:115px;width:890px;height:23px;background:#fff"></div>
<div style="position:absolute;left:890px;top:115px;width:241px;height:23px;background:#f4f4f5"></div>
<div style="position:absolute;left:0px;top:137px;width:1131px;height:1px;background:repeating-linear-gradient(90deg,#b9b9c3 0 3px,transparent 3px 5px)"></div>
<div style="position:absolute;left:89px;top:115px;width:1px;height:23px;background:repeating-linear-gradient(180deg,#b9b9c3 0 3px,transparent 3px 5px)"></div>
<div style="position:absolute;left:179px;top:115px;width:1px;height:23px;background:repeating-linear-gradient(180deg,#b9b9c3 0 3px,transparent 3px 5px)"></div>
<div style="position:absolute;left:269px;top:115px;width:1px;height:23px;background:#d0d0d4"></div>
<div style="position:absolute;left:359px;top:115px;width:1px;height:23px;background:repeating-linear-gradient(180deg,#b9b9c3 0 3px,transparent 3px 5px)"></div>
<div style="position:absolute;left:449px;top:115px;width:1px;height:23px;background:repeating-linear-gradient(180deg,#b9b9c3 0 3px,transparent 3px 5px)"></div>
<div style="position:absolute;left:539px;top:115px;width:1px;height:23px;background:#d0d0d4"></div>
<div style="position:absolute;left:629px;top:115px;width:1px;height:23px;background:repeating-linear-gradient(180deg,#b9b9c3 0 3px,transparent 3px 5px)"></div>
<div style="position:absolute;left:719px;top:115px;width:1px;height:23px;background:repeating-linear-gradient(180deg,#b9b9c3 0 3px,transparent 3px 5px)"></div>
<div style="position:absolute;left:809px;top:115px;width:1px;height:23px;background:#d0d0d4"></div>
<div style="position:absolute;left:890px;top:115px;width:1px;height:23px;background:#c8c8cc"></div>
<div style="position:absolute;left:970px;top:115px;width:1px;height:23px;background:repeating-linear-gradient(180deg,#b9b9c3 0 3px,transparent 3px 5px)"></div>
<div style="position:absolute;left:1050px;top:115px;width:1px;height:23px;background:repeating-linear-gradient(180deg,#b9b9c3 0 3px,transparent 3px 5px)"></div>
<div style="position:absolute;left:890px;top:113px;width:80px;height:23px;line-height:23px;font-size:12px;color:#222;text-align:center;letter-spacing:-0.33px">541</div>
<div style="position:absolute;left:970px;top:113px;width:80px;height:23px;line-height:23px;font-size:12px;color:#222;text-align:center;letter-spacing:-0.33px">541</div>
<div style="position:absolute;left:1050px;top:113px;width:80px;height:23px;line-height:23px;font-size:12px;color:#222;text-align:center;letter-spacing:-0.33px">541</div>
<div style="position:absolute;left:0px;top:138px;width:1131px;height:23px;background:#22599d"></div>
<div style="position:absolute;left:890px;top:136px;width:80px;height:23px;line-height:23px;font-size:12px;color:#fff;text-align:center;letter-spacing:-0.38px">1 583</div>
<div style="position:absolute;left:970px;top:136px;width:80px;height:23px;line-height:23px;font-size:12px;color:#fff;text-align:center;letter-spacing:-0.38px">1 583</div>
<div style="position:absolute;left:1050px;top:136px;width:80px;height:23px;line-height:23px;font-size:12px;color:#fff;text-align:center;letter-spacing:-0.38px">1 583</div>
<div style="position:absolute;left:890px;top:138px;width:1px;height:23px;background:rgba(255,255,255,.45)"></div>
<div style="position:absolute;left:0px;top:161px;width:1131px;height:23px;background:#2a69b5"></div>
<div style="position:absolute;left:890px;top:159px;width:80px;height:23px;line-height:23px;font-size:12px;color:#fff;text-align:center;letter-spacing:-0.38px">1 349</div>
<div style="position:absolute;left:970px;top:159px;width:80px;height:23px;line-height:23px;font-size:12px;color:#fff;text-align:center;letter-spacing:-0.38px">1 349</div>
<div style="position:absolute;left:1050px;top:159px;width:80px;height:23px;line-height:23px;font-size:12px;color:#fff;text-align:center;letter-spacing:-0.38px">1 349</div>
<div style="position:absolute;left:890px;top:161px;width:1px;height:23px;background:rgba(255,255,255,.45)"></div>
<div style="position:absolute;left:0px;top:184px;width:890px;height:23px;background:#fff"></div>
<div style="position:absolute;left:890px;top:184px;width:241px;height:23px;background:#f4f4f5"></div>
<div style="position:absolute;left:0px;top:206px;width:1131px;height:1px;background:repeating-linear-gradient(90deg,#b9b9c3 0 3px,transparent 3px 5px)"></div>
<div style="position:absolute;left:89px;top:184px;width:1px;height:23px;background:repeating-linear-gradient(180deg,#b9b9c3 0 3px,transparent 3px 5px)"></div>
<div style="position:absolute;left:179px;top:184px;width:1px;height:23px;background:repeating-linear-gradient(180deg,#b9b9c3 0 3px,transparent 3px 5px)"></div>
<div style="position:absolute;left:269px;top:184px;width:1px;height:23px;background:#d0d0d4"></div>
<div style="position:absolute;left:359px;top:184px;width:1px;height:23px;background:repeating-linear-gradient(180deg,#b9b9c3 0 3px,transparent 3px 5px)"></div>
<div style="position:absolute;left:449px;top:184px;width:1px;height:23px;background:repeating-linear-gradient(180deg,#b9b9c3 0 3px,transparent 3px 5px)"></div>
<div style="position:absolute;left:539px;top:184px;width:1px;height:23px;background:#d0d0d4"></div>
<div style="position:absolute;left:629px;top:184px;width:1px;height:23px;background:repeating-linear-gradient(180deg,#b9b9c3 0 3px,transparent 3px 5px)"></div>
<div style="position:absolute;left:719px;top:184px;width:1px;height:23px;background:repeating-linear-gradient(180deg,#b9b9c3 0 3px,transparent 3px 5px)"></div>
<div style="position:absolute;left:809px;top:184px;width:1px;height:23px;background:#d0d0d4"></div>
<div style="position:absolute;left:890px;top:184px;width:1px;height:23px;background:#c8c8cc"></div>
<div style="position:absolute;left:970px;top:184px;width:1px;height:23px;background:repeating-linear-gradient(180deg,#b9b9c3 0 3px,transparent 3px 5px)"></div>
<div style="position:absolute;left:1050px;top:184px;width:1px;height:23px;background:repeating-linear-gradient(180deg,#b9b9c3 0 3px,transparent 3px 5px)"></div>
<div style="position:absolute;left:890px;top:182px;width:80px;height:23px;line-height:23px;font-size:12px;color:#222;text-align:center;letter-spacing:-0.33px">34</div>
<div style="position:absolute;left:970px;top:182px;width:80px;height:23px;line-height:23px;font-size:12px;color:#222;text-align:center;letter-spacing:-0.33px">34</div>
<div style="position:absolute;left:1050px;top:182px;width:80px;height:23px;line-height:23px;font-size:12px;color:#222;text-align:center;letter-spacing:-0.33px">34</div>
<div style="position:absolute;left:0px;top:207px;width:890px;height:23px;background:#dce8f7"></div>
<div style="position:absolute;left:890px;top:207px;width:241px;height:23px;background:#dce8f7"></div>
<div style="position:absolute;left:0px;top:229px;width:1131px;height:1px;background:repeating-linear-gradient(90deg,#b9b9c3 0 3px,transparent 3px 5px)"></div>
<div style="position:absolute;left:89px;top:207px;width:1px;height:23px;background:repeating-linear-gradient(180deg,#b9b9c3 0 3px,transparent 3px 5px)"></div>
<div style="position:absolute;left:179px;top:207px;width:1px;height:23px;background:repeating-linear-gradient(180deg,#b9b9c3 0 3px,transparent 3px 5px)"></div>
<div style="position:absolute;left:269px;top:207px;width:1px;height:23px;background:#d0d0d4"></div>
<div style="position:absolute;left:359px;top:207px;width:1px;height:23px;background:repeating-linear-gradient(180deg,#b9b9c3 0 3px,transparent 3px 5px)"></div>
<div style="position:absolute;left:449px;top:207px;width:1px;height:23px;background:repeating-linear-gradient(180deg,#b9b9c3 0 3px,transparent 3px 5px)"></div>
<div style="position:absolute;left:539px;top:207px;width:1px;height:23px;background:#d0d0d4"></div>
<div style="position:absolute;left:629px;top:207px;width:1px;height:23px;background:repeating-linear-gradient(180deg,#b9b9c3 0 3px,transparent 3px 5px)"></div>
<div style="position:absolute;left:719px;top:207px;width:1px;height:23px;background:repeating-linear-gradient(180deg,#b9b9c3 0 3px,transparent 3px 5px)"></div>
<div style="position:absolute;left:809px;top:207px;width:1px;height:23px;background:#d0d0d4"></div>
<div style="position:absolute;left:890px;top:207px;width:1px;height:23px;background:#c8c8cc"></div>
<div style="position:absolute;left:970px;top:207px;width:1px;height:23px;background:repeating-linear-gradient(180deg,#b9b9c3 0 3px,transparent 3px 5px)"></div>
<div style="position:absolute;left:1050px;top:207px;width:1px;height:23px;background:repeating-linear-gradient(180deg,#b9b9c3 0 3px,transparent 3px 5px)"></div>
<div style="position:absolute;left:890px;top:205px;width:80px;height:23px;line-height:23px;font-size:12px;color:#222;text-align:center;letter-spacing:-0.33px">25</div>
<div style="position:absolute;left:970px;top:205px;width:80px;height:23px;line-height:23px;font-size:12px;color:#222;text-align:center;letter-spacing:-0.33px">25</div>
<div style="position:absolute;left:1050px;top:205px;width:80px;height:23px;line-height:23px;font-size:12px;color:#222;text-align:center;letter-spacing:-0.33px">25</div>
<div style="position:absolute;left:0px;top:230px;width:890px;height:23px;background:#fff"></div>
<div style="position:absolute;left:890px;top:230px;width:241px;height:23px;background:#f4f4f5"></div>
<div style="position:absolute;left:0px;top:252px;width:1131px;height:1px;background:repeating-linear-gradient(90deg,#b9b9c3 0 3px,transparent 3px 5px)"></div>
<div style="position:absolute;left:89px;top:230px;width:1px;height:23px;background:repeating-linear-gradient(180deg,#b9b9c3 0 3px,transparent 3px 5px)"></div>
<div style="position:absolute;left:179px;top:230px;width:1px;height:23px;background:repeating-linear-gradient(180deg,#b9b9c3 0 3px,transparent 3px 5px)"></div>
<div style="position:absolute;left:269px;top:230px;width:1px;height:23px;background:#d0d0d4"></div>
<div style="position:absolute;left:359px;top:230px;width:1px;height:23px;background:repeating-linear-gradient(180deg,#b9b9c3 0 3px,transparent 3px 5px)"></div>
<div style="position:absolute;left:449px;top:230px;width:1px;height:23px;background:repeating-linear-gradient(180deg,#b9b9c3 0 3px,transparent 3px 5px)"></div>
<div style="position:absolute;left:539px;top:230px;width:1px;height:23px;background:#d0d0d4"></div>
<div style="position:absolute;left:629px;top:230px;width:1px;height:23px;background:repeating-linear-gradient(180deg,#b9b9c3 0 3px,transparent 3px 5px)"></div>
<div style="position:absolute;left:719px;top:230px;width:1px;height:23px;background:repeating-linear-gradient(180deg,#b9b9c3 0 3px,transparent 3px 5px)"></div>
<div style="position:absolute;left:809px;top:230px;width:1px;height:23px;background:#d0d0d4"></div>
<div style="position:absolute;left:890px;top:230px;width:1px;height:23px;background:#c8c8cc"></div>
<div style="position:absolute;left:970px;top:230px;width:1px;height:23px;background:repeating-linear-gradient(180deg,#b9b9c3 0 3px,transparent 3px 5px)"></div>
<div style="position:absolute;left:1050px;top:230px;width:1px;height:23px;background:repeating-linear-gradient(180deg,#b9b9c3 0 3px,transparent 3px 5px)"></div>
<div style="position:absolute;left:890px;top:228px;width:80px;height:23px;line-height:23px;font-size:12px;color:#222;text-align:center;letter-spacing:-0.33px">87</div>
<div style="position:absolute;left:970px;top:228px;width:80px;height:23px;line-height:23px;font-size:12px;color:#222;text-align:center;letter-spacing:-0.33px">87</div>
<div style="position:absolute;left:1050px;top:228px;width:80px;height:23px;line-height:23px;font-size:12px;color:#222;text-align:center;letter-spacing:-0.33px">87</div>
<div style="position:absolute;left:0px;top:253px;width:890px;height:23px;background:#fff"></div>
<div style="position:absolute;left:890px;top:253px;width:241px;height:23px;background:#f4f4f5"></div>
<div style="position:absolute;left:0px;top:275px;width:1131px;height:1px;background:repeating-linear-gradient(90deg,#b9b9c3 0 3px,transparent 3px 5px)"></div>
<div style="position:absolute;left:89px;top:253px;width:1px;height:23px;background:repeating-linear-gradient(180deg,#b9b9c3 0 3px,transparent 3px 5px)"></div>
<div style="position:absolute;left:179px;top:253px;width:1px;height:23px;background:repeating-linear-gradient(180deg,#b9b9c3 0 3px,transparent 3px 5px)"></div>
<div style="position:absolute;left:269px;top:253px;width:1px;height:23px;background:#d0d0d4"></div>
<div style="position:absolute;left:359px;top:253px;width:1px;height:23px;background:repeating-linear-gradient(180deg,#b9b9c3 0 3px,transparent 3px 5px)"></div>
<div style="position:absolute;left:449px;top:253px;width:1px;height:23px;background:repeating-linear-gradient(180deg,#b9b9c3 0 3px,transparent 3px 5px)"></div>
<div style="position:absolute;left:539px;top:253px;width:1px;height:23px;background:#d0d0d4"></div>
<div style="position:absolute;left:629px;top:253px;width:1px;height:23px;background:repeating-linear-gradient(180deg,#b9b9c3 0 3px,transparent 3px 5px)"></div>
<div style="position:absolute;left:719px;top:253px;width:1px;height:23px;background:repeating-linear-gradient(180deg,#b9b9c3 0 3px,transparent 3px 5px)"></div>
<div style="position:absolute;left:809px;top:253px;width:1px;height:23px;background:#d0d0d4"></div>
<div style="position:absolute;left:890px;top:253px;width:1px;height:23px;background:#c8c8cc"></div>
<div style="position:absolute;left:970px;top:253px;width:1px;height:23px;background:repeating-linear-gradient(180deg,#b9b9c3 0 3px,transparent 3px 5px)"></div>
<div style="position:absolute;left:1050px;top:253px;width:1px;height:23px;background:repeating-linear-gradient(180deg,#b9b9c3 0 3px,transparent 3px 5px)"></div>
<div style="position:absolute;left:890px;top:251px;width:80px;height:23px;line-height:23px;font-size:12px;color:#222;text-align:center;letter-spacing:-0.33px">672</div>
<div style="position:absolute;left:970px;top:251px;width:80px;height:23px;line-height:23px;font-size:12px;color:#222;text-align:center;letter-spacing:-0.33px">672</div>
<div style="position:absolute;left:1050px;top:251px;width:80px;height:23px;line-height:23px;font-size:12px;color:#222;text-align:center;letter-spacing:-0.33px">672</div>
<div style="position:absolute;left:0px;top:276px;width:890px;height:23px;background:#fff"></div>
<div style="position:absolute;left:890px;top:276px;width:241px;height:23px;background:#f4f4f5"></div>
<div style="position:absolute;left:0px;top:298px;width:1131px;height:1px;background:repeating-linear-gradient(90deg,#b9b9c3 0 3px,transparent 3px 5px)"></div>
<div style="position:absolute;left:89px;top:276px;width:1px;height:23px;background:repeating-linear-gradient(180deg,#b9b9c3 0 3px,transparent 3px 5px)"></div>
<div style="position:absolute;left:179px;top:276px;width:1px;height:23px;background:repeating-linear-gradient(180deg,#b9b9c3 0 3px,transparent 3px 5px)"></div>
<div style="position:absolute;left:269px;top:276px;width:1px;height:23px;background:#d0d0d4"></div>
<div style="position:absolute;left:359px;top:276px;width:1px;height:23px;background:repeating-linear-gradient(180deg,#b9b9c3 0 3px,transparent 3px 5px)"></div>
<div style="position:absolute;left:449px;top:276px;width:1px;height:23px;background:repeating-linear-gradient(180deg,#b9b9c3 0 3px,transparent 3px 5px)"></div>
<div style="position:absolute;left:539px;top:276px;width:1px;height:23px;background:#d0d0d4"></div>
<div style="position:absolute;left:629px;top:276px;width:1px;height:23px;background:repeating-linear-gradient(180deg,#b9b9c3 0 3px,transparent 3px 5px)"></div>
<div style="position:absolute;left:719px;top:276px;width:1px;height:23px;background:repeating-linear-gradient(180deg,#b9b9c3 0 3px,transparent 3px 5px)"></div>
<div style="position:absolute;left:809px;top:276px;width:1px;height:23px;background:#d0d0d4"></div>
<div style="position:absolute;left:890px;top:276px;width:1px;height:23px;background:#c8c8cc"></div>
<div style="position:absolute;left:970px;top:276px;width:1px;height:23px;background:repeating-linear-gradient(180deg,#b9b9c3 0 3px,transparent 3px 5px)"></div>
<div style="position:absolute;left:1050px;top:276px;width:1px;height:23px;background:repeating-linear-gradient(180deg,#b9b9c3 0 3px,transparent 3px 5px)"></div>
<div style="position:absolute;left:890px;top:274px;width:80px;height:23px;line-height:23px;font-size:12px;color:#222;text-align:center;letter-spacing:-0.33px">531</div>
<div style="position:absolute;left:970px;top:274px;width:80px;height:23px;line-height:23px;font-size:12px;color:#222;text-align:center;letter-spacing:-0.33px">531</div>
<div style="position:absolute;left:1050px;top:274px;width:80px;height:23px;line-height:23px;font-size:12px;color:#222;text-align:center;letter-spacing:-0.33px">531</div>
<div style="position:absolute;left:0px;top:299px;width:1131px;height:23px;background:#2a69b5"></div>
<div style="position:absolute;left:890px;top:297px;width:80px;height:23px;line-height:23px;font-size:12px;color:#fff;text-align:center;letter-spacing:-0.38px">157</div>
<div style="position:absolute;left:970px;top:297px;width:80px;height:23px;line-height:23px;font-size:12px;color:#fff;text-align:center;letter-spacing:-0.38px">157</div>
<div style="position:absolute;left:1050px;top:297px;width:80px;height:23px;line-height:23px;font-size:12px;color:#fff;text-align:center;letter-spacing:-0.38px">157</div>
<div style="position:absolute;left:890px;top:299px;width:1px;height:23px;background:rgba(255,255,255,.45)"></div>
<div style="position:absolute;left:0px;top:322px;width:890px;height:23px;background:#fff"></div>
<div style="position:absolute;left:890px;top:322px;width:241px;height:23px;background:#f4f4f5"></div>
<div style="position:absolute;left:0px;top:344px;width:1131px;height:1px;background:repeating-linear-gradient(90deg,#b9b9c3 0 3px,transparent 3px 5px)"></div>
<div style="position:absolute;left:89px;top:322px;width:1px;height:23px;background:repeating-linear-gradient(180deg,#b9b9c3 0 3px,transparent 3px 5px)"></div>
<div style="position:absolute;left:179px;top:322px;width:1px;height:23px;background:repeating-linear-gradient(180deg,#b9b9c3 0 3px,transparent 3px 5px)"></div>
<div style="position:absolute;left:269px;top:322px;width:1px;height:23px;background:#d0d0d4"></div>
<div style="position:absolute;left:359px;top:322px;width:1px;height:23px;background:repeating-linear-gradient(180deg,#b9b9c3 0 3px,transparent 3px 5px)"></div>
<div style="position:absolute;left:449px;top:322px;width:1px;height:23px;background:repeating-linear-gradient(180deg,#b9b9c3 0 3px,transparent 3px 5px)"></div>
<div style="position:absolute;left:539px;top:322px;width:1px;height:23px;background:#d0d0d4"></div>
<div style="position:absolute;left:629px;top:322px;width:1px;height:23px;background:repeating-linear-gradient(180deg,#b9b9c3 0 3px,transparent 3px 5px)"></div>
<div style="position:absolute;left:719px;top:322px;width:1px;height:23px;background:repeating-linear-gradient(180deg,#b9b9c3 0 3px,transparent 3px 5px)"></div>
<div style="position:absolute;left:809px;top:322px;width:1px;height:23px;background:#d0d0d4"></div>
<div style="position:absolute;left:890px;top:322px;width:1px;height:23px;background:#c8c8cc"></div>
<div style="position:absolute;left:970px;top:322px;width:1px;height:23px;background:repeating-linear-gradient(180deg,#b9b9c3 0 3px,transparent 3px 5px)"></div>
<div style="position:absolute;left:1050px;top:322px;width:1px;height:23px;background:repeating-linear-gradient(180deg,#b9b9c3 0 3px,transparent 3px 5px)"></div>
<div style="position:absolute;left:890px;top:320px;width:80px;height:23px;line-height:23px;font-size:12px;color:#222;text-align:center;letter-spacing:-0.33px">12</div>
<div style="position:absolute;left:970px;top:320px;width:80px;height:23px;line-height:23px;font-size:12px;color:#222;text-align:center;letter-spacing:-0.33px">12</div>
<div style="position:absolute;left:1050px;top:320px;width:80px;height:23px;line-height:23px;font-size:12px;color:#222;text-align:center;letter-spacing:-0.33px">12</div>
<div style="position:absolute;left:0px;top:345px;width:890px;height:23px;background:#fff"></div>
<div style="position:absolute;left:890px;top:345px;width:241px;height:23px;background:#f4f4f5"></div>
<div style="position:absolute;left:0px;top:367px;width:1131px;height:1px;background:repeating-linear-gradient(90deg,#b9b9c3 0 3px,transparent 3px 5px)"></div>
<div style="position:absolute;left:89px;top:345px;width:1px;height:23px;background:repeating-linear-gradient(180deg,#b9b9c3 0 3px,transparent 3px 5px)"></div>
<div style="position:absolute;left:179px;top:345px;width:1px;height:23px;background:repeating-linear-gradient(180deg,#b9b9c3 0 3px,transparent 3px 5px)"></div>
<div style="position:absolute;left:269px;top:345px;width:1px;height:23px;background:#d0d0d4"></div>
<div style="position:absolute;left:359px;top:345px;width:1px;height:23px;background:repeating-linear-gradient(180deg,#b9b9c3 0 3px,transparent 3px 5px)"></div>
<div style="position:absolute;left:449px;top:345px;width:1px;height:23px;background:repeating-linear-gradient(180deg,#b9b9c3 0 3px,transparent 3px 5px)"></div>
<div style="position:absolute;left:539px;top:345px;width:1px;height:23px;background:#d0d0d4"></div>
<div style="position:absolute;left:629px;top:345px;width:1px;height:23px;background:repeating-linear-gradient(180deg,#b9b9c3 0 3px,transparent 3px 5px)"></div>
<div style="position:absolute;left:719px;top:345px;width:1px;height:23px;background:repeating-linear-gradient(180deg,#b9b9c3 0 3px,transparent 3px 5px)"></div>
<div style="position:absolute;left:809px;top:345px;width:1px;height:23px;background:#d0d0d4"></div>
<div style="position:absolute;left:890px;top:345px;width:1px;height:23px;background:#c8c8cc"></div>
<div style="position:absolute;left:970px;top:345px;width:1px;height:23px;background:repeating-linear-gradient(180deg,#b9b9c3 0 3px,transparent 3px 5px)"></div>
<div style="position:absolute;left:1050px;top:345px;width:1px;height:23px;background:repeating-linear-gradient(180deg,#b9b9c3 0 3px,transparent 3px 5px)"></div>
<div style="position:absolute;left:890px;top:343px;width:80px;height:23px;line-height:23px;font-size:12px;color:#222;text-align:center;letter-spacing:-0.33px">45</div>
<div style="position:absolute;left:970px;top:343px;width:80px;height:23px;line-height:23px;font-size:12px;color:#222;text-align:center;letter-spacing:-0.33px">45</div>
<div style="position:absolute;left:1050px;top:343px;width:80px;height:23px;line-height:23px;font-size:12px;color:#222;text-align:center;letter-spacing:-0.33px">45</div>
<div style="position:absolute;left:0px;top:368px;width:890px;height:23px;background:#fff"></div>
<div style="position:absolute;left:890px;top:368px;width:241px;height:23px;background:#f4f4f5"></div>
<div style="position:absolute;left:0px;top:390px;width:1131px;height:1px;background:repeating-linear-gradient(90deg,#b9b9c3 0 3px,transparent 3px 5px)"></div>
<div style="position:absolute;left:89px;top:368px;width:1px;height:23px;background:repeating-linear-gradient(180deg,#b9b9c3 0 3px,transparent 3px 5px)"></div>
<div style="position:absolute;left:179px;top:368px;width:1px;height:23px;background:repeating-linear-gradient(180deg,#b9b9c3 0 3px,transparent 3px 5px)"></div>
<div style="position:absolute;left:269px;top:368px;width:1px;height:23px;background:#d0d0d4"></div>
<div style="position:absolute;left:359px;top:368px;width:1px;height:23px;background:repeating-linear-gradient(180deg,#b9b9c3 0 3px,transparent 3px 5px)"></div>
<div style="position:absolute;left:449px;top:368px;width:1px;height:23px;background:repeating-linear-gradient(180deg,#b9b9c3 0 3px,transparent 3px 5px)"></div>
<div style="position:absolute;left:539px;top:368px;width:1px;height:23px;background:#d0d0d4"></div>
<div style="position:absolute;left:629px;top:368px;width:1px;height:23px;background:repeating-linear-gradient(180deg,#b9b9c3 0 3px,transparent 3px 5px)"></div>
<div style="position:absolute;left:719px;top:368px;width:1px;height:23px;background:repeating-linear-gradient(180deg,#b9b9c3 0 3px,transparent 3px 5px)"></div>
<div style="position:absolute;left:809px;top:368px;width:1px;height:23px;background:#d0d0d4"></div>
<div style="position:absolute;left:890px;top:368px;width:1px;height:23px;background:#c8c8cc"></div>
<div style="position:absolute;left:970px;top:368px;width:1px;height:23px;background:repeating-linear-gradient(180deg,#b9b9c3 0 3px,transparent 3px 5px)"></div>
<div style="position:absolute;left:1050px;top:368px;width:1px;height:23px;background:repeating-linear-gradient(180deg,#b9b9c3 0 3px,transparent 3px 5px)"></div>
<div style="position:absolute;left:890px;top:366px;width:80px;height:23px;line-height:23px;font-size:12px;color:#222;text-align:center;letter-spacing:-0.33px">100</div>
<div style="position:absolute;left:970px;top:366px;width:80px;height:23px;line-height:23px;font-size:12px;color:#222;text-align:center;letter-spacing:-0.33px">100</div>
<div style="position:absolute;left:1050px;top:366px;width:80px;height:23px;line-height:23px;font-size:12px;color:#222;text-align:center;letter-spacing:-0.33px">100</div>
<div style="position:absolute;left:0px;top:391px;width:1131px;height:23px;background:#2a69b5"></div>
<div style="position:absolute;left:890px;top:389px;width:80px;height:23px;line-height:23px;font-size:12px;color:#fff;text-align:center;letter-spacing:-0.38px">77</div>
<div style="position:absolute;left:970px;top:389px;width:80px;height:23px;line-height:23px;font-size:12px;color:#fff;text-align:center;letter-spacing:-0.38px">77</div>
<div style="position:absolute;left:1050px;top:389px;width:80px;height:23px;line-height:23px;font-size:12px;color:#fff;text-align:center;letter-spacing:-0.38px">77</div>
<div style="position:absolute;left:890px;top:391px;width:1px;height:23px;background:rgba(255,255,255,.45)"></div>
<div style="position:absolute;left:0px;top:414px;width:890px;height:23px;background:#fff"></div>
<div style="position:absolute;left:890px;top:414px;width:241px;height:23px;background:#f4f4f5"></div>
<div style="position:absolute;left:0px;top:436px;width:1131px;height:1px;background:repeating-linear-gradient(90deg,#b9b9c3 0 3px,transparent 3px 5px)"></div>
<div style="position:absolute;left:89px;top:414px;width:1px;height:23px;background:repeating-linear-gradient(180deg,#b9b9c3 0 3px,transparent 3px 5px)"></div>
<div style="position:absolute;left:179px;top:414px;width:1px;height:23px;background:repeating-linear-gradient(180deg,#b9b9c3 0 3px,transparent 3px 5px)"></div>
<div style="position:absolute;left:269px;top:414px;width:1px;height:23px;background:#d0d0d4"></div>
<div style="position:absolute;left:359px;top:414px;width:1px;height:23px;background:repeating-linear-gradient(180deg,#b9b9c3 0 3px,transparent 3px 5px)"></div>
<div style="position:absolute;left:449px;top:414px;width:1px;height:23px;background:repeating-linear-gradient(180deg,#b9b9c3 0 3px,transparent 3px 5px)"></div>
<div style="position:absolute;left:539px;top:414px;width:1px;height:23px;background:#d0d0d4"></div>
<div style="position:absolute;left:629px;top:414px;width:1px;height:23px;background:repeating-linear-gradient(180deg,#b9b9c3 0 3px,transparent 3px 5px)"></div>
<div style="position:absolute;left:719px;top:414px;width:1px;height:23px;background:repeating-linear-gradient(180deg,#b9b9c3 0 3px,transparent 3px 5px)"></div>
<div style="position:absolute;left:809px;top:414px;width:1px;height:23px;background:#d0d0d4"></div>
<div style="position:absolute;left:890px;top:414px;width:1px;height:23px;background:#c8c8cc"></div>
<div style="position:absolute;left:970px;top:414px;width:1px;height:23px;background:repeating-linear-gradient(180deg,#b9b9c3 0 3px,transparent 3px 5px)"></div>
<div style="position:absolute;left:1050px;top:414px;width:1px;height:23px;background:repeating-linear-gradient(180deg,#b9b9c3 0 3px,transparent 3px 5px)"></div>
<div style="position:absolute;left:890px;top:412px;width:80px;height:23px;line-height:23px;font-size:12px;color:#222;text-align:center;letter-spacing:-0.33px">77</div>
<div style="position:absolute;left:970px;top:412px;width:80px;height:23px;line-height:23px;font-size:12px;color:#222;text-align:center;letter-spacing:-0.33px">77</div>
<div style="position:absolute;left:1050px;top:412px;width:80px;height:23px;line-height:23px;font-size:12px;color:#222;text-align:center;letter-spacing:-0.33px">77</div>
<div style="position:absolute;left:0px;top:437px;width:890px;height:23px;background:#fff"></div>
<div style="position:absolute;left:890px;top:437px;width:241px;height:23px;background:#f4f4f5"></div>
<div style="position:absolute;left:0px;top:459px;width:1131px;height:1px;background:repeating-linear-gradient(90deg,#b9b9c3 0 3px,transparent 3px 5px)"></div>
<div style="position:absolute;left:89px;top:437px;width:1px;height:23px;background:repeating-linear-gradient(180deg,#b9b9c3 0 3px,transparent 3px 5px)"></div>
<div style="position:absolute;left:179px;top:437px;width:1px;height:23px;background:repeating-linear-gradient(180deg,#b9b9c3 0 3px,transparent 3px 5px)"></div>
<div style="position:absolute;left:269px;top:437px;width:1px;height:23px;background:#d0d0d4"></div>
<div style="position:absolute;left:359px;top:437px;width:1px;height:23px;background:repeating-linear-gradient(180deg,#b9b9c3 0 3px,transparent 3px 5px)"></div>
<div style="position:absolute;left:449px;top:437px;width:1px;height:23px;background:repeating-linear-gradient(180deg,#b9b9c3 0 3px,transparent 3px 5px)"></div>
<div style="position:absolute;left:539px;top:437px;width:1px;height:23px;background:#d0d0d4"></div>
<div style="position:absolute;left:629px;top:437px;width:1px;height:23px;background:repeating-linear-gradient(180deg,#b9b9c3 0 3px,transparent 3px 5px)"></div>
<div style="position:absolute;left:719px;top:437px;width:1px;height:23px;background:repeating-linear-gradient(180deg,#b9b9c3 0 3px,transparent 3px 5px)"></div>
<div style="position:absolute;left:809px;top:437px;width:1px;height:23px;background:#d0d0d4"></div>
<div style="position:absolute;left:890px;top:437px;width:1px;height:23px;background:#c8c8cc"></div>
<div style="position:absolute;left:970px;top:437px;width:1px;height:23px;background:repeating-linear-gradient(180deg,#b9b9c3 0 3px,transparent 3px 5px)"></div>
<div style="position:absolute;left:1050px;top:437px;width:1px;height:23px;background:repeating-linear-gradient(180deg,#b9b9c3 0 3px,transparent 3px 5px)"></div>
<div style="position:absolute;left:890px;top:435px;width:80px;height:23px;line-height:23px;font-size:12px;color:#222;text-align:center;letter-spacing:-0.33px"></div>
<div style="position:absolute;left:970px;top:435px;width:80px;height:23px;line-height:23px;font-size:12px;color:#222;text-align:center;letter-spacing:-0.33px"></div>
<div style="position:absolute;left:1050px;top:435px;width:80px;height:23px;line-height:23px;font-size:12px;color:#222;text-align:center;letter-spacing:-0.33px"></div>
</div>
<div style="position:absolute;left:779px;top:588px;width:1131px;height:13px;background:#f0f0f3"></div>
<div style="position:absolute;left:780px;top:589px;width:20px;height:11px;background:#dcdcdf;border-radius:5px"></div>
<div style="position:absolute;left:45px;top:601px;width:1873px;height:6px;background:#b8b8bd"></div>
<div style="position:absolute;left:45px;top:607px;width:1873px;height:52px;background:#fff"></div>
<div style="position:absolute;left:45px;top:659px;width:1873px;height:1px;background:#c6c6ca"></div>
<div class="t" style="left:90px;top:618px;height:24px;line-height:24px;font-size:16px;letter-spacing:0.75px;color:#3a3a3f">Карточка работы</div>
<div class="t" style="left:318px;top:618px;height:24px;line-height:24px;font-size:16px;letter-spacing:0.75px;color:#3a3a3f">Связи работы</div>
<div class="t" style="left:519px;top:618px;height:24px;line-height:24px;font-size:16px;letter-spacing:0.75px;color:#3a3a3f">Связанные графики</div>
<div class="t" style="left:771px;top:618px;height:24px;line-height:24px;font-size:16px;letter-spacing:0.75px;color:#3a3a3f">Справочники</div>
<div class="t" style="left:969px;top:618px;height:24px;line-height:24px;font-size:16px;letter-spacing:0.75px;color:#1b74d3">Ресурсное планирование</div>
<div class="t" style="left:1264px;top:618px;height:24px;line-height:24px;font-size:16px;letter-spacing:0.75px;color:#3a3a3f">Чек-листы</div>
<div class="t" style="left:1437px;top:618px;height:24px;line-height:24px;font-size:16px;letter-spacing:0.75px;color:#3a3a3f">Фото / Документация</div>
<div class="t" style="left:1702px;top:618px;height:24px;line-height:24px;font-size:16px;letter-spacing:0.75px;color:#3a3a3f">Запросы и поручения</div>
<div style="position:absolute;left:923px;top:648px;width:296px;height:3px;background:#1b74d3"></div>
<div style="position:absolute;left:45px;top:660px;width:1873px;height:42px;background:#efeff2"></div>
<div style="position:absolute;left:45px;top:702px;width:1873px;height:1px;background:#c6c6ca"></div>
<div style="position:absolute;left:296px;top:661px;width:44px;height:41px;background:#dcdcdf"></div>
<div style="position:absolute;left:93px;top:660px;width:1px;height:42px;background:#c6c6ca"></div>
<div style="position:absolute;left:194px;top:660px;width:1px;height:42px;background:#c6c6ca"></div>
<div style="position:absolute;left:440px;top:660px;width:1px;height:42px;background:#c6c6ca"></div>
<svg style="position:absolute;left:53.0px;top:670.0px;color:#4a4a50" width="24" height="24" viewBox="0 0 24 24" fill="none" stroke="#4a4a50" stroke-width="1.9" stroke-linecap="round" stroke-linejoin="round" ><path d="M1.5 2.5h19L13.5 11v10l-5-3v-7z"/><path d="M17 21h6l-3 3z" fill="currentColor" stroke="none"/></svg>
<svg style="position:absolute;left:108.0px;top:670.0px;color:#4a4a50" width="24" height="24" viewBox="0 0 24 24" fill="none" stroke="#4a4a50" stroke-width="1.9" stroke-linecap="round" stroke-linejoin="round" ><g transform="translate(24,0) scale(-1,1)"><path d="M6 9.5h3.5V6L5.5 2a6.5 6.5 0 0 1 8.5 8.5l7.5 7.5a2.3 2.3 0 0 1-3.3 3.3l-7.5-7.5A6.5 6.5 0 0 1 2.2 5.5z"/></g><path d="M17.5 21h6l-3 3z" fill="currentColor" stroke="none"/></svg>
<svg style="position:absolute;left:156.0px;top:670.0px;color:#4a4a50" width="24" height="24" viewBox="0 0 24 24" fill="none" stroke="#4a4a50" stroke-width="1.9" stroke-linecap="round" stroke-linejoin="round" ><rect x="2" y="4" width="20" height="19.5" rx="3.5"/><path d="M2 9h20M7.5 9v14.5M12 9v14.5M16.5 9v14.5M7 1v5M17 1v5"/></svg>
<svg style="position:absolute;left:209.0px;top:670.0px;color:#c9c9cd" width="24" height="24" viewBox="0 0 24 24" fill="none" stroke="#c9c9cd" stroke-width="1.9" stroke-linecap="round" stroke-linejoin="round" ><rect x="2" y="4" width="20" height="19.5" rx="3.5"/><path d="M2 9h20M7 1v5M17 1v5"/><path d="M6.5 12v8"/><path d="M16.5 11.5v9l-6-4.5z" fill="currentColor" stroke="none"/></svg>
<svg style="position:absolute;left:257.0px;top:670.0px;color:#c9c9cd" width="24" height="24" viewBox="0 0 24 24" fill="none" stroke="#c9c9cd" stroke-width="1.9" stroke-linecap="round" stroke-linejoin="round" ><rect x="2" y="4" width="20" height="19.5" rx="3.5"/><path d="M2 9h20M7 1v5M17 1v5"/><path d="M6.5 12v8"/><path d="M10 11.5v9l6-4.5z" fill="currentColor" stroke="none"/></svg>
<svg style="position:absolute;left:305.0px;top:670.0px;color:#4a4a50" width="24" height="24" viewBox="0 0 24 24" fill="none" stroke="#4a4a50" stroke-width="1.9" stroke-linecap="round" stroke-linejoin="round" ><rect x="2" y="4" width="20" height="19.5" rx="3.5"/><path d="M2 9h20M7 1v5M17 1v5"/><text x="12" y="20.8" font-size="11.5" font-weight="bold" text-anchor="middle" fill="currentColor" stroke="none" font-family="Liberation Sans">S</text></svg>
<svg style="position:absolute;left:353.0px;top:670.0px;color:#4a4a50" width="24" height="24" viewBox="0 0 24 24" fill="none" stroke="#4a4a50" stroke-width="1.9" stroke-linecap="round" stroke-linejoin="round" ><rect x="2" y="4" width="20" height="19.5" rx="3.5"/><path d="M2 9h20M7 1v5M17 1v5"/><text x="12" y="20.8" font-size="11.5" font-weight="bold" text-anchor="middle" fill="currentColor" stroke="none" font-family="Liberation Sans">D</text></svg>
<svg style="position:absolute;left:401.0px;top:670.0px;color:#4a4a50" width="24" height="24" viewBox="0 0 24 24" fill="none" stroke="#4a4a50" stroke-width="1.9" stroke-linecap="round" stroke-linejoin="round" ><rect x="2" y="4" width="20" height="19.5" rx="3.5"/><path d="M2 9h20M7 1v5M17 1v5"/><text x="12" y="20.8" font-size="11.5" font-weight="bold" text-anchor="middle" fill="currentColor" stroke="none" font-family="Liberation Sans">F</text></svg>
<svg style="position:absolute;left:454.0px;top:670.0px;color:#4a4a50" width="24" height="24" viewBox="0 0 24 24" fill="none" stroke="#4a4a50" stroke-width="1.9" stroke-linecap="round" stroke-linejoin="round" ><circle cx="12" cy="12" r="11"/><path d="M6.5 12.5l2 2 4-4M10.5 14.5l1 .5 5-5.5" stroke-width="1.8"/></svg>
<svg style="position:absolute;left:502.0px;top:670.0px;color:#c9c9cd" width="24" height="24" viewBox="0 0 24 24" fill="none" stroke="#c9c9cd" stroke-width="1.9" stroke-linecap="round" stroke-linejoin="round" ><circle cx="12" cy="12" r="11"/><path d="M7.5 12l3 3 6-6" stroke-width="1.6"/></svg>
<svg style="position:absolute;left:550.0px;top:670.0px;color:#c9c9cd" width="24" height="24" viewBox="0 0 24 24" fill="none" stroke="#c9c9cd" stroke-width="1.9" stroke-linecap="round" stroke-linejoin="round" ><circle cx="12" cy="12" r="11"/><path d="M8.5 8.5l7 7M15.5 8.5l-7 7" stroke-width="1.6"/></svg>
<div style="position:absolute;left:45px;top:703px;width:1873px;height:207px;background:#fff"></div>
<div style="position:absolute;left:45px;top:703px;width:1873px;height:49px;background:#efeff2"></div>
<div style="position:absolute;left:45px;top:727px;width:1873px;height:1px;background:#d0d0d4"></div>
<div style="position:absolute;left:45px;top:752px;width:1873px;height:1px;background:#c6c6ca"></div>
<div style="position:absolute;left:45px;top:729px;width:139px;height:24px;line-height:24px;font-size:12px;color:#222;text-align:center">Тип</div>
<div style="position:absolute;left:184px;top:729px;width:120px;height:24px;line-height:24px;font-size:12px;color:#222;text-align:center">Наименование</div>
<div style="position:absolute;left:184px;top:727px;width:1px;height:158px;background:#c6c6ca"></div>
<div style="position:absolute;left:304px;top:729px;width:120px;height:24px;line-height:24px;font-size:12px;color:#222;text-align:center">План</div>
<div style="position:absolute;left:304px;top:727px;width:1px;height:158px;background:#c6c6ca"></div>
<div style="position:absolute;left:424px;top:729px;width:101px;height:24px;line-height:24px;font-size:12px;color:#222;text-align:center">Факт</div>
<div style="position:absolute;left:424px;top:727px;width:1px;height:158px;background:#c6c6ca"></div>
<div style="position:absolute;left:525px;top:729px;width:100px;height:24px;line-height:24px;font-size:12px;color:#222;text-align:center">Остаток</div>
<div style="position:absolute;left:525px;top:727px;width:1px;height:158px;background:#c6c6ca"></div>
<div style="position:absolute;left:625px;top:729px;width:120px;height:24px;line-height:24px;font-size:12px;color:#222;text-align:center">Нераспределенн...</div>
<div style="position:absolute;left:625px;top:727px;width:1px;height:158px;background:#c6c6ca"></div>
<div style="position:absolute;left:745px;top:729px;width:100px;height:24px;line-height:24px;font-size:12px;color:#222;text-align:center">Долг</div>
<div style="position:absolute;left:745px;top:727px;width:1px;height:158px;background:#c6c6ca"></div>
<div style="position:absolute;left:845px;top:702px;width:1px;height:198px;background:#c6c6ca"></div>
<div style="position:absolute;left:45px;top:796px;width:800px;height:1px;background:#c6c6ca"></div>
<div style="position:absolute;left:80px;top:754px;width:100px;height:43px;line-height:43px;font-size:12px;color:#222">Физобъем</div>
<div class="t" style="left:195px;top:754px;width:109px;height:43px;line-height:43px;font-size:12px;color:#222">Устройство буронаб</div>
<div style="position:absolute;left:305px;top:754px;width:120px;height:43px;line-height:43px;font-size:12px;color:#222;text-align:center">25</div>
<div style="position:absolute;left:425px;top:754px;width:101px;height:43px;line-height:43px;font-size:12px;color:#222;text-align:center">25</div>
<div style="position:absolute;left:526px;top:754px;width:100px;height:43px;line-height:43px;font-size:12px;color:#222;text-align:center">0</div>
<div style="position:absolute;left:626px;top:754px;width:120px;height:43px;line-height:43px;font-size:12px;color:#222;text-align:center">0</div>
<div style="position:absolute;left:746px;top:754px;width:100px;height:43px;line-height:43px;font-size:12px;color:#222;text-align:center">0</div>
<div style="position:absolute;left:45px;top:840px;width:800px;height:1px;background:#c6c6ca"></div>
<div style="position:absolute;left:80px;top:798px;width:100px;height:43px;line-height:43px;font-size:12px;color:#222">Трудозатраты</div>
<div class="t" style="left:195px;top:798px;width:109px;height:43px;line-height:43px;font-size:12px;color:#222"></div>
<div style="position:absolute;left:305px;top:798px;width:120px;height:43px;line-height:43px;font-size:12px;color:#222;text-align:center">150</div>
<div style="position:absolute;left:425px;top:798px;width:101px;height:43px;line-height:43px;font-size:12px;color:#222;text-align:center">150</div>
<div style="position:absolute;left:526px;top:798px;width:100px;height:43px;line-height:43px;font-size:12px;color:#222;text-align:center">0</div>
<div style="position:absolute;left:626px;top:798px;width:120px;height:43px;line-height:43px;font-size:12px;color:#222;text-align:center">0</div>
<div style="position:absolute;left:746px;top:798px;width:100px;height:43px;line-height:43px;font-size:12px;color:#222;text-align:center">0</div>
<div style="position:absolute;left:45px;top:884px;width:800px;height:1px;background:#c6c6ca"></div>
<div style="position:absolute;left:80px;top:842px;width:100px;height:43px;line-height:43px;font-size:12px;color:#222">Стоимость</div>
<div class="t" style="left:195px;top:842px;width:109px;height:43px;line-height:43px;font-size:12px;color:#222"></div>
<div style="position:absolute;left:305px;top:842px;width:120px;height:43px;line-height:43px;font-size:12px;color:#222;text-align:center">114 750</div>
<div style="position:absolute;left:425px;top:842px;width:101px;height:43px;line-height:43px;font-size:12px;color:#222;text-align:center">114 750</div>
<div style="position:absolute;left:526px;top:842px;width:100px;height:43px;line-height:43px;font-size:12px;color:#222;text-align:center">0</div>
<div style="position:absolute;left:626px;top:842px;width:120px;height:43px;line-height:43px;font-size:12px;color:#222;text-align:center">0</div>
<div style="position:absolute;left:746px;top:842px;width:100px;height:43px;line-height:43px;font-size:12px;color:#222;text-align:center">0</div>
<div style="position:absolute;left:846px;top:702px;width:1072px;height:183px;overflow:hidden">
<div style="position:absolute;left:0px;top:2px;width:350px;height:24px;line-height:24px;font-size:12px;color:#222;text-align:center;letter-spacing:-0.34px">17.10.2025</div>
<div style="position:absolute;left:0px;top:27px;width:70px;height:24px;line-height:24px;font-size:12px;color:#222;text-align:center">Согл.план</div>
<div style="position:absolute;left:70px;top:27px;width:70px;height:24px;line-height:24px;font-size:12px;color:#222;text-align:center">Опер.план</div>
<div style="position:absolute;left:69px;top:26px;width:1px;height:24px;background:repeating-linear-gradient(180deg,#b9b9c3 0 3px,transparent 3px 5px)"></div>
<div style="position:absolute;left:140px;top:27px;width:70px;height:24px;line-height:24px;font-size:12px;color:#222;text-align:center">Факт</div>
<div style="position:absolute;left:139px;top:26px;width:1px;height:24px;background:repeating-linear-gradient(180deg,#b9b9c3 0 3px,transparent 3px 5px)"></div>
<div style="position:absolute;left:210px;top:27px;width:70px;height:24px;line-height:24px;font-size:12px;color:#222;text-align:center">Уд. трудоз...</div>
<div style="position:absolute;left:209px;top:26px;width:1px;height:24px;background:repeating-linear-gradient(180deg,#b9b9c3 0 3px,transparent 3px 5px)"></div>
<div style="position:absolute;left:280px;top:27px;width:70px;height:24px;line-height:24px;font-size:12px;color:#222;text-align:center">Ставка</div>
<div style="position:absolute;left:279px;top:26px;width:1px;height:24px;background:repeating-linear-gradient(180deg,#b9b9c3 0 3px,transparent 3px 5px)"></div>
<div style="position:absolute;left:0px;top:51px;width:349px;height:44px;background:#c6dcf1"></div>
<div style="position:absolute;left:0px;top:94px;width:350px;height:1px;background:repeating-linear-gradient(90deg,#b9b9c3 0 3px,transparent 3px 5px)"></div>
<div style="position:absolute;left:2px;top:52px;width:70px;height:43px;line-height:43px;font-size:12px;color:#7b7b80;text-align:center">5</div>
<div style="position:absolute;left:69px;top:51px;width:1px;height:44px;background:repeating-linear-gradient(180deg,#b9b9c3 0 3px,transparent 3px 5px)"></div>
<div style="position:absolute;left:72px;top:52px;width:70px;height:43px;line-height:43px;font-size:12px;color:#7b7b80;text-align:center">5</div>
<div style="position:absolute;left:139px;top:51px;width:1px;height:44px;background:repeating-linear-gradient(180deg,#b9b9c3 0 3px,transparent 3px 5px)"></div>
<div style="position:absolute;left:142px;top:52px;width:70px;height:43px;line-height:43px;font-size:12px;color:#68c48e;text-align:center">5</div>
<svg style="position:absolute;left:140px;top:51px" width="20" height="20"><path d="M0 0h20L0 20z" fill="#72c98f"/></svg>
<div style="position:absolute;left:209px;top:51px;width:1px;height:44px;background:repeating-linear-gradient(180deg,#b9b9c3 0 3px,transparent 3px 5px)"></div>
<div style="position:absolute;left:212px;top:52px;width:70px;height:43px;line-height:43px;font-size:12px;color:#7b7b80;text-align:center">6</div>
<div style="position:absolute;left:279px;top:51px;width:1px;height:44px;background:repeating-linear-gradient(180deg,#b9b9c3 0 3px,transparent 3px 5px)"></div>
<div style="position:absolute;left:282px;top:52px;width:70px;height:43px;line-height:43px;font-size:12px;color:#7b7b80;text-align:center">4 590</div>
<div style="position:absolute;left:0px;top:95px;width:349px;height:44px;background:#c6dcf1"></div>
<div style="position:absolute;left:0px;top:138px;width:350px;height:1px;background:repeating-linear-gradient(90deg,#b9b9c3 0 3px,transparent 3px 5px)"></div>
<div style="position:absolute;left:2px;top:96px;width:70px;height:43px;line-height:43px;font-size:12px;color:#7b7b80;text-align:center">25</div>
<div style="position:absolute;left:69px;top:95px;width:1px;height:44px;background:repeating-linear-gradient(180deg,#b9b9c3 0 3px,transparent 3px 5px)"></div>
<div style="position:absolute;left:72px;top:96px;width:70px;height:43px;line-height:43px;font-size:12px;color:#7b7b80;text-align:center">25</div>
<div style="position:absolute;left:139px;top:95px;width:1px;height:44px;background:repeating-linear-gradient(180deg,#b9b9c3 0 3px,transparent 3px 5px)"></div>
<div style="position:absolute;left:142px;top:96px;width:70px;height:43px;line-height:43px;font-size:12px;color:#68c48e;text-align:center">25</div>
<svg style="position:absolute;left:140px;top:95px" width="20" height="20"><path d="M0 0h20L0 20z" fill="#72c98f"/></svg>
<div style="position:absolute;left:209px;top:95px;width:1px;height:44px;background:repeating-linear-gradient(180deg,#b9b9c3 0 3px,transparent 3px 5px)"></div>
<div style="position:absolute;left:212px;top:96px;width:70px;height:43px;line-height:43px;font-size:12px;color:#7b7b80;text-align:center">6</div>
<div style="position:absolute;left:279px;top:95px;width:1px;height:44px;background:repeating-linear-gradient(180deg,#b9b9c3 0 3px,transparent 3px 5px)"></div>
<div style="position:absolute;left:282px;top:96px;width:70px;height:43px;line-height:43px;font-size:12px;color:#7b7b80;text-align:center">4 590</div>
<div style="position:absolute;left:0px;top:139px;width:349px;height:44px;background:#c6dcf1"></div>
<div style="position:absolute;left:0px;top:182px;width:350px;height:1px;background:repeating-linear-gradient(90deg,#b9b9c3 0 3px,transparent 3px 5px)"></div>
<div style="position:absolute;left:2px;top:140px;width:70px;height:43px;line-height:43px;font-size:12px;color:#7b7b80;text-align:center">19 125</div>
<div style="position:absolute;left:69px;top:139px;width:1px;height:44px;background:repeating-linear-gradient(180deg,#b9b9c3 0 3px,transparent 3px 5px)"></div>
<div style="position:absolute;left:72px;top:140px;width:70px;height:43px;line-height:43px;font-size:12px;color:#7b7b80;text-align:center">19 125</div>
<div style="position:absolute;left:139px;top:139px;width:1px;height:44px;background:repeating-linear-gradient(180deg,#b9b9c3 0 3px,transparent 3px 5px)"></div>
<div style="position:absolute;left:142px;top:140px;width:70px;height:43px;line-height:43px;font-size:12px;color:#68c48e;text-align:center">19 125</div>
<svg style="position:absolute;left:140px;top:139px" width="20" height="20"><path d="M0 0h20L0 20z" fill="#72c98f"/></svg>
<div style="position:absolute;left:209px;top:139px;width:1px;height:44px;background:repeating-linear-gradient(180deg,#b9b9c3 0 3px,transparent 3px 5px)"></div>
<div style="position:absolute;left:212px;top:140px;width:70px;height:43px;line-height:43px;font-size:12px;color:#7b7b80;text-align:center">6</div>
<div style="position:absolute;left:279px;top:139px;width:1px;height:44px;background:repeating-linear-gradient(180deg,#b9b9c3 0 3px,transparent 3px 5px)"></div>
<div style="position:absolute;left:282px;top:140px;width:70px;height:43px;line-height:43px;font-size:12px;color:#7b7b80;text-align:center">4 590</div>
<div style="position:absolute;left:350px;top:2px;width:350px;height:24px;line-height:24px;font-size:12px;color:#222;text-align:center;letter-spacing:-0.34px">18.10.2025</div>
<div style="position:absolute;left:349px;top:0px;width:1px;height:183px;background:#c6c6ca"></div>
<div style="position:absolute;left:350px;top:27px;width:70px;height:24px;line-height:24px;font-size:12px;color:#222;text-align:center">Согл.план</div>
<div style="position:absolute;left:420px;top:27px;width:70px;height:24px;line-height:24px;font-size:12px;color:#222;text-align:center">Опер.план</div>
<div style="position:absolute;left:419px;top:26px;width:1px;height:24px;background:repeating-linear-gradient(180deg,#b9b9c3 0 3px,transparent 3px 5px)"></div>
<div style="position:absolute;left:490px;top:27px;width:70px;height:24px;line-height:24px;font-size:12px;color:#222;text-align:center">Факт</div>
<div style="position:absolute;left:489px;top:26px;width:1px;height:24px;background:repeating-linear-gradient(180deg,#b9b9c3 0 3px,transparent 3px 5px)"></div>
<div style="position:absolute;left:560px;top:27px;width:70px;height:24px;line-height:24px;font-size:12px;color:#222;text-align:center">Уд. трудоз...</div>
<div style="position:absolute;left:559px;top:26px;width:1px;height:24px;background:repeating-linear-gradient(180deg,#b9b9c3 0 3px,transparent 3px 5px)"></div>
<div style="position:absolute;left:630px;top:27px;width:70px;height:24px;line-height:24px;font-size:12px;color:#222;text-align:center">Ставка</div>
<div style="position:absolute;left:629px;top:26px;width:1px;height:24px;background:repeating-linear-gradient(180deg,#b9b9c3 0 3px,transparent 3px 5px)"></div>
<div style="position:absolute;left:350px;top:51px;width:349px;height:44px;background:#c6dcf1"></div>
<div style="position:absolute;left:350px;top:94px;width:350px;height:1px;background:repeating-linear-gradient(90deg,#b9b9c3 0 3px,transparent 3px 5px)"></div>
<div style="position:absolute;left:352px;top:52px;width:70px;height:43px;line-height:43px;font-size:12px;color:#7b7b80;text-align:center">5</div>
<div style="position:absolute;left:419px;top:51px;width:1px;height:44px;background:repeating-linear-gradient(180deg,#b9b9c3 0 3px,transparent 3px 5px)"></div>
<div style="position:absolute;left:422px;top:52px;width:70px;height:43px;line-height:43px;font-size:12px;color:#7b7b80;text-align:center">5</div>
<div style="position:absolute;left:489px;top:51px;width:1px;height:44px;background:repeating-linear-gradient(180deg,#b9b9c3 0 3px,transparent 3px 5px)"></div>
<div style="position:absolute;left:492px;top:52px;width:70px;height:43px;line-height:43px;font-size:12px;color:#68c48e;text-align:center">5</div>
<svg style="position:absolute;left:490px;top:51px" width="20" height="20"><path d="M0 0h20L0 20z" fill="#72c98f"/></svg>
<div style="position:absolute;left:559px;top:51px;width:1px;height:44px;background:repeating-linear-gradient(180deg,#b9b9c3 0 3px,transparent 3px 5px)"></div>
<div style="position:absolute;left:562px;top:52px;width:70px;height:43px;line-height:43px;font-size:12px;color:#7b7b80;text-align:center">6</div>
<div style="position:absolute;left:629px;top:51px;width:1px;height:44px;background:repeating-linear-gradient(180deg,#b9b9c3 0 3px,transparent 3px 5px)"></div>
<div style="position:absolute;left:632px;top:52px;width:70px;height:43px;line-height:43px;font-size:12px;color:#7b7b80;text-align:center">4 590</div>
<div style="position:absolute;left:350px;top:95px;width:349px;height:44px;background:#c6dcf1"></div>
<div style="position:absolute;left:350px;top:138px;width:350px;height:1px;background:repeating-linear-gradient(90deg,#b9b9c3 0 3px,transparent 3px 5px)"></div>
<div style="position:absolute;left:352px;top:96px;width:70px;height:43px;line-height:43px;font-size:12px;color:#7b7b80;text-align:center">25</div>
<div style="position:absolute;left:419px;top:95px;width:1px;height:44px;background:repeating-linear-gradient(180deg,#b9b9c3 0 3px,transparent 3px 5px)"></div>
<div style="position:absolute;left:422px;top:96px;width:70px;height:43px;line-height:43px;font-size:12px;color:#7b7b80;text-align:center">25</div>
<div style="position:absolute;left:489px;top:95px;width:1px;height:44px;background:repeating-linear-gradient(180deg,#b9b9c3 0 3px,transparent 3px 5px)"></div>
<div style="position:absolute;left:492px;top:96px;width:70px;height:43px;line-height:43px;font-size:12px;color:#68c48e;text-align:center">25</div>
<svg style="position:absolute;left:490px;top:95px" width="20" height="20"><path d="M0 0h20L0 20z" fill="#72c98f"/></svg>
<div style="position:absolute;left:559px;top:95px;width:1px;height:44px;background:repeating-linear-gradient(180deg,#b9b9c3 0 3px,transparent 3px 5px)"></div>
<div style="position:absolute;left:562px;top:96px;width:70px;height:43px;line-height:43px;font-size:12px;color:#7b7b80;text-align:center">6</div>
<div style="position:absolute;left:629px;top:95px;width:1px;height:44px;background:repeating-linear-gradient(180deg,#b9b9c3 0 3px,transparent 3px 5px)"></div>
<div style="position:absolute;left:632px;top:96px;width:70px;height:43px;line-height:43px;font-size:12px;color:#7b7b80;text-align:center">4 590</div>
<div style="position:absolute;left:350px;top:139px;width:349px;height:44px;background:#c6dcf1"></div>
<div style="position:absolute;left:350px;top:182px;width:350px;height:1px;background:repeating-linear-gradient(90deg,#b9b9c3 0 3px,transparent 3px 5px)"></div>
<div style="position:absolute;left:352px;top:140px;width:70px;height:43px;line-height:43px;font-size:12px;color:#7b7b80;text-align:center">19 125</div>
<div style="position:absolute;left:419px;top:139px;width:1px;height:44px;background:repeating-linear-gradient(180deg,#b9b9c3 0 3px,transparent 3px 5px)"></div>
<div style="position:absolute;left:422px;top:140px;width:70px;height:43px;line-height:43px;font-size:12px;color:#7b7b80;text-align:center">19 125</div>
<div style="position:absolute;left:489px;top:139px;width:1px;height:44px;background:repeating-linear-gradient(180deg,#b9b9c3 0 3px,transparent 3px 5px)"></div>
<div style="position:absolute;left:492px;top:140px;width:70px;height:43px;line-height:43px;font-size:12px;color:#68c48e;text-align:center">19 125</div>
<svg style="position:absolute;left:490px;top:139px" width="20" height="20"><path d="M0 0h20L0 20z" fill="#72c98f"/></svg>
<div style="position:absolute;left:559px;top:139px;width:1px;height:44px;background:repeating-linear-gradient(180deg,#b9b9c3 0 3px,transparent 3px 5px)"></div>
<div style="position:absolute;left:562px;top:140px;width:70px;height:43px;line-height:43px;font-size:12px;color:#7b7b80;text-align:center">6</div>
<div style="position:absolute;left:629px;top:139px;width:1px;height:44px;background:repeating-linear-gradient(180deg,#b9b9c3 0 3px,transparent 3px 5px)"></div>
<div style="position:absolute;left:632px;top:140px;width:70px;height:43px;line-height:43px;font-size:12px;color:#7b7b80;text-align:center">4 590</div>
<div style="position:absolute;left:700px;top:2px;width:350px;height:24px;line-height:24px;font-size:12px;color:#222;text-align:center;letter-spacing:-0.34px">19.10.2025</div>
<div style="position:absolute;left:699px;top:0px;width:1px;height:183px;background:#c6c6ca"></div>
<div style="position:absolute;left:700px;top:27px;width:70px;height:24px;line-height:24px;font-size:12px;color:#222;text-align:center">Согл.план</div>
<div style="position:absolute;left:770px;top:27px;width:70px;height:24px;line-height:24px;font-size:12px;color:#222;text-align:center">Опер.план</div>
<div style="position:absolute;left:769px;top:26px;width:1px;height:24px;background:repeating-linear-gradient(180deg,#b9b9c3 0 3px,transparent 3px 5px)"></div>
<div style="position:absolute;left:840px;top:27px;width:70px;height:24px;line-height:24px;font-size:12px;color:#222;text-align:center">Факт</div>
<div style="position:absolute;left:839px;top:26px;width:1px;height:24px;background:repeating-linear-gradient(180deg,#b9b9c3 0 3px,transparent 3px 5px)"></div>
<div style="position:absolute;left:910px;top:27px;width:70px;height:24px;line-height:24px;font-size:12px;color:#222;text-align:center">Уд. трудоз...</div>
<div style="position:absolute;left:909px;top:26px;width:1px;height:24px;background:repeating-linear-gradient(180deg,#b9b9c3 0 3px,transparent 3px 5px)"></div>
<div style="position:absolute;left:980px;top:27px;width:70px;height:24px;line-height:24px;font-size:12px;color:#222;text-align:center">Ставка</div>
<div style="position:absolute;left:979px;top:26px;width:1px;height:24px;background:repeating-linear-gradient(180deg,#b9b9c3 0 3px,transparent 3px 5px)"></div>
<div style="position:absolute;left:700px;top:51px;width:349px;height:44px;background:#c6dcf1"></div>
<div style="position:absolute;left:700px;top:94px;width:350px;height:1px;background:repeating-linear-gradient(90deg,#b9b9c3 0 3px,transparent 3px 5px)"></div>
<div style="position:absolute;left:702px;top:52px;width:70px;height:43px;line-height:43px;font-size:12px;color:#7b7b80;text-align:center">5</div>
<div style="position:absolute;left:769px;top:51px;width:1px;height:44px;background:repeating-linear-gradient(180deg,#b9b9c3 0 3px,transparent 3px 5px)"></div>
<div style="position:absolute;left:772px;top:52px;width:70px;height:43px;line-height:43px;font-size:12px;color:#7b7b80;text-align:center">5</div>
<div style="position:absolute;left:839px;top:51px;width:1px;height:44px;background:repeating-linear-gradient(180deg,#b9b9c3 0 3px,transparent 3px 5px)"></div>
<div style="position:absolute;left:842px;top:52px;width:70px;height:43px;line-height:43px;font-size:12px;color:#68c48e;text-align:center">5</div>
<svg style="position:absolute;left:840px;top:51px" width="20" height="20"><path d="M0 0h20L0 20z" fill="#72c98f"/></svg>
<div style="position:absolute;left:909px;top:51px;width:1px;height:44px;background:repeating-linear-gradient(180deg,#b9b9c3 0 3px,transparent 3px 5px)"></div>
<div style="position:absolute;left:912px;top:52px;width:70px;height:43px;line-height:43px;font-size:12px;color:#7b7b80;text-align:center">6</div>
<div style="position:absolute;left:979px;top:51px;width:1px;height:44px;background:repeating-linear-gradient(180deg,#b9b9c3 0 3px,transparent 3px 5px)"></div>
<div style="position:absolute;left:982px;top:52px;width:70px;height:43px;line-height:43px;font-size:12px;color:#7b7b80;text-align:center">4 590</div>
<div style="position:absolute;left:700px;top:95px;width:349px;height:44px;background:#c6dcf1"></div>
<div style="position:absolute;left:700px;top:138px;width:350px;height:1px;background:repeating-linear-gradient(90deg,#b9b9c3 0 3px,transparent 3px 5px)"></div>
<div style="position:absolute;left:702px;top:96px;width:70px;height:43px;line-height:43px;font-size:12px;color:#7b7b80;text-align:center">25</div>
<div style="position:absolute;left:769px;top:95px;width:1px;height:44px;background:repeating-linear-gradient(180deg,#b9b9c3 0 3px,transparent 3px 5px)"></div>
<div style="position:absolute;left:772px;top:96px;width:70px;height:43px;line-height:43px;font-size:12px;color:#7b7b80;text-align:center">25</div>
<div style="position:absolute;left:839px;top:95px;width:1px;height:44px;background:repeating-linear-gradient(180deg,#b9b9c3 0 3px,transparent 3px 5px)"></div>
<div style="position:absolute;left:842px;top:96px;width:70px;height:43px;line-height:43px;font-size:12px;color:#68c48e;text-align:center">25</div>
<svg style="position:absolute;left:840px;top:95px" width="20" height="20"><path d="M0 0h20L0 20z" fill="#72c98f"/></svg>
<div style="position:absolute;left:909px;top:95px;width:1px;height:44px;background:repeating-linear-gradient(180deg,#b9b9c3 0 3px,transparent 3px 5px)"></div>
<div style="position:absolute;left:912px;top:96px;width:70px;height:43px;line-height:43px;font-size:12px;color:#7b7b80;text-align:center">6</div>
<div style="position:absolute;left:979px;top:95px;width:1px;height:44px;background:repeating-linear-gradient(180deg,#b9b9c3 0 3px,transparent 3px 5px)"></div>
<div style="position:absolute;left:982px;top:96px;width:70px;height:43px;line-height:43px;font-size:12px;color:#7b7b80;text-align:center">4 590</div>
<div style="position:absolute;left:700px;top:139px;width:349px;height:44px;background:#c6dcf1"></div>
<div style="position:absolute;left:700px;top:182px;width:350px;height:1px;background:repeating-linear-gradient(90deg,#b9b9c3 0 3px,transparent 3px 5px)"></div>
<div style="position:absolute;left:702px;top:140px;width:70px;height:43px;line-height:43px;font-size:12px;color:#7b7b80;text-align:center">19 125</div>
<div style="position:absolute;left:769px;top:139px;width:1px;height:44px;background:repeating-linear-gradient(180deg,#b9b9c3 0 3px,transparent 3px 5px)"></div>
<div style="position:absolute;left:772px;top:140px;width:70px;height:43px;line-height:43px;font-size:12px;color:#7b7b80;text-align:center">19 125</div>
<div style="position:absolute;left:839px;top:139px;width:1px;height:44px;background:repeating-linear-gradient(180deg,#b9b9c3 0 3px,transparent 3px 5px)"></div>
<div style="position:absolute;left:842px;top:140px;width:70px;height:43px;line-height:43px;font-size:12px;color:#68c48e;text-align:center">19 125</div>
<svg style="position:absolute;left:840px;top:139px" width="20" height="20"><path d="M0 0h20L0 20z" fill="#72c98f"/></svg>
<div style="position:absolute;left:909px;top:139px;width:1px;height:44px;background:repeating-linear-gradient(180deg,#b9b9c3 0 3px,transparent 3px 5px)"></div>
<div style="position:absolute;left:912px;top:140px;width:70px;height:43px;line-height:43px;font-size:12px;color:#7b7b80;text-align:center">6</div>
<div style="position:absolute;left:979px;top:139px;width:1px;height:44px;background:repeating-linear-gradient(180deg,#b9b9c3 0 3px,transparent 3px 5px)"></div>
<div style="position:absolute;left:982px;top:140px;width:70px;height:43px;line-height:43px;font-size:12px;color:#7b7b80;text-align:center">4 590</div>
<div style="position:absolute;left:1050px;top:2px;width:350px;height:24px;line-height:24px;font-size:12px;color:#222;text-align:center;letter-spacing:-0.34px">20.10.2025</div>
<div style="position:absolute;left:1049px;top:0px;width:1px;height:183px;background:#c6c6ca"></div>
<div style="position:absolute;left:1050px;top:27px;width:70px;height:24px;line-height:24px;font-size:12px;color:#222;text-align:center">Согл.план</div>
<div style="position:absolute;left:1120px;top:27px;width:70px;height:24px;line-height:24px;font-size:12px;color:#222;text-align:center">Опер.план</div>
<div style="position:absolute;left:1119px;top:26px;width:1px;height:24px;background:repeating-linear-gradient(180deg,#b9b9c3 0 3px,transparent 3px 5px)"></div>
<div style="position:absolute;left:1190px;top:27px;width:70px;height:24px;line-height:24px;font-size:12px;color:#222;text-align:center">Факт</div>
<div style="position:absolute;left:1189px;top:26px;width:1px;height:24px;background:repeating-linear-gradient(180deg,#b9b9c3 0 3px,transparent 3px 5px)"></div>
<div style="position:absolute;left:1260px;top:27px;width:70px;height:24px;line-height:24px;font-size:12px;color:#222;text-align:center">Уд. трудоз...</div>
<div style="position:absolute;left:1259px;top:26px;width:1px;height:24px;background:repeating-linear-gradient(180deg,#b9b9c3 0 3px,transparent 3px 5px)"></div>
<div style="position:absolute;left:1330px;top:27px;width:70px;height:24px;line-height:24px;font-size:12px;color:#222;text-align:center">Ставка</div>
<div style="position:absolute;left:1329px;top:26px;width:1px;height:24px;background:repeating-linear-gradient(180deg,#b9b9c3 0 3px,transparent 3px 5px)"></div>
<div style="position:absolute;left:1050px;top:51px;width:349px;height:44px;background:#c6dcf1"></div>
<div style="position:absolute;left:1050px;top:94px;width:350px;height:1px;background:repeating-linear-gradient(90deg,#b9b9c3 0 3px,transparent 3px 5px)"></div>
<div style="position:absolute;left:1052px;top:52px;width:70px;height:43px;line-height:43px;font-size:12px;color:#7b7b80;text-align:center">5</div>
<div style="position:absolute;left:1119px;top:51px;width:1px;height:44px;background:repeating-linear-gradient(180deg,#b9b9c3 0 3px,transparent 3px 5px)"></div>
<div style="position:absolute;left:1122px;top:52px;width:70px;height:43px;line-height:43px;font-size:12px;color:#7b7b80;text-align:center">5</div>
<div style="position:absolute;left:1189px;top:51px;width:1px;height:44px;background:repeating-linear-gradient(180deg,#b9b9c3 0 3px,transparent 3px 5px)"></div>
<div style="position:absolute;left:1192px;top:52px;width:70px;height:43px;line-height:43px;font-size:12px;color:#68c48e;text-align:center">5</div>
<svg style="position:absolute;left:1190px;top:51px" width="20" height="20"><path d="M0 0h20L0 20z" fill="#72c98f"/></svg>
<div style="position:absolute;left:1259px;top:51px;width:1px;height:44px;background:repeating-linear-gradient(180deg,#b9b9c3 0 3px,transparent 3px 5px)"></div>
<div style="position:absolute;left:1262px;top:52px;width:70px;height:43px;line-height:43px;font-size:12px;color:#7b7b80;text-align:center">6</div>
<div style="position:absolute;left:1329px;top:51px;width:1px;height:44px;background:repeating-linear-gradient(180deg,#b9b9c3 0 3px,transparent 3px 5px)"></div>
<div style="position:absolute;left:1332px;top:52px;width:70px;height:43px;line-height:43px;font-size:12px;color:#7b7b80;text-align:center">4 590</div>
<div style="position:absolute;left:1050px;top:95px;width:349px;height:44px;background:#c6dcf1"></div>
<div style="position:absolute;left:1050px;top:138px;width:350px;height:1px;background:repeating-linear-gradient(90deg,#b9b9c3 0 3px,transparent 3px 5px)"></div>
<div style="position:absolute;left:1052px;top:96px;width:70px;height:43px;line-height:43px;font-size:12px;color:#7b7b80;text-align:center">25</div>
<div style="position:absolute;left:1119px;top:95px;width:1px;height:44px;background:repeating-linear-gradient(180deg,#b9b9c3 0 3px,transparent 3px 5px)"></div>
<div style="position:absolute;left:1122px;top:96px;width:70px;height:43px;line-height:43px;font-size:12px;color:#7b7b80;text-align:center">25</div>
<div style="position:absolute;left:1189px;top:95px;width:1px;height:44px;background:repeating-linear-gradient(180deg,#b9b9c3 0 3px,transparent 3px 5px)"></div>
<div style="position:absolute;left:1192px;top:96px;width:70px;height:43px;line-height:43px;font-size:12px;color:#68c48e;text-align:center">25</div>
<svg style="position:absolute;left:1190px;top:95px" width="20" height="20"><path d="M0 0h20L0 20z" fill="#72c98f"/></svg>
<div style="position:absolute;left:1259px;top:95px;width:1px;height:44px;background:repeating-linear-gradient(180deg,#b9b9c3 0 3px,transparent 3px 5px)"></div>
<div style="position:absolute;left:1262px;top:96px;width:70px;height:43px;line-height:43px;font-size:12px;color:#7b7b80;text-align:center">6</div>
<div style="position:absolute;left:1329px;top:95px;width:1px;height:44px;background:repeating-linear-gradient(180deg,#b9b9c3 0 3px,transparent 3px 5px)"></div>
<div style="position:absolute;left:1332px;top:96px;width:70px;height:43px;line-height:43px;font-size:12px;color:#7b7b80;text-align:center">4 590</div>
<div style="position:absolute;left:1050px;top:139px;width:349px;height:44px;background:#c6dcf1"></div>
<div style="position:absolute;left:1050px;top:182px;width:350px;height:1px;background:repeating-linear-gradient(90deg,#b9b9c3 0 3px,transparent 3px 5px)"></div>
<div style="position:absolute;left:1052px;top:140px;width:70px;height:43px;line-height:43px;font-size:12px;color:#7b7b80;text-align:center">19 125</div>
<div style="position:absolute;left:1119px;top:139px;width:1px;height:44px;background:repeating-linear-gradient(180deg,#b9b9c3 0 3px,transparent 3px 5px)"></div>
<div style="position:absolute;left:1122px;top:140px;width:70px;height:43px;line-height:43px;font-size:12px;color:#7b7b80;text-align:center">19 125</div>
<div style="position:absolute;left:1189px;top:139px;width:1px;height:44px;background:repeating-linear-gradient(180deg,#b9b9c3 0 3px,transparent 3px 5px)"></div>
<div style="position:absolute;left:1192px;top:140px;width:70px;height:43px;line-height:43px;font-size:12px;color:#68c48e;text-align:center">19 125</div>
<svg style="position:absolute;left:1190px;top:139px" width="20" height="20"><path d="M0 0h20L0 20z" fill="#72c98f"/></svg>
<div style="position:absolute;left:1259px;top:139px;width:1px;height:44px;background:repeating-linear-gradient(180deg,#b9b9c3 0 3px,transparent 3px 5px)"></div>
<div style="position:absolute;left:1262px;top:140px;width:70px;height:43px;line-height:43px;font-size:12px;color:#7b7b80;text-align:center">6</div>
<div style="position:absolute;left:1329px;top:139px;width:1px;height:44px;background:repeating-linear-gradient(180deg,#b9b9c3 0 3px,transparent 3px 5px)"></div>
<div style="position:absolute;left:1332px;top:140px;width:70px;height:43px;line-height:43px;font-size:12px;color:#7b7b80;text-align:center">4 590</div>
</div>
<div style="position:absolute;left:45px;top:900px;width:1873px;height:10px;background:#f0f0f3"></div>
<div style="position:absolute;left:296px;top:901px;width:35px;height:9px;background:#dcdcdf;border-radius:4px"></div>
<svg style="position:absolute;left:54px;top:765px;color:#4a4a50" width="18" height="18" viewBox="0 0 18 18"><circle cx="9" cy="2" r="1.5" fill="currentColor"/><path d="M1 6.5l4-3 3.5 1 1 3 3 2.5" fill="none" stroke="currentColor" stroke-width="1.6" stroke-linejoin="round"/><path d="M3 6l4.5 2.5-1.5 3" fill="currentColor"/><path d="M4.5 9l-1.5 7M7 11l1 5" stroke="currentColor" stroke-width="1.6" fill="none"/><path d="M10 16l4-6 3.5 6z" fill="currentColor"/></svg>
<svg style="position:absolute;left:54px;top:809px;color:#4a4a50" width="18" height="18" viewBox="0 0 18 18"><path d="M5 6.5a4 4 0 0 1 8 0z" fill="currentColor"/><path d="M9 1.5v2" stroke="currentColor" stroke-width="1.6"/><path d="M5.5 7.5a3.5 3.5 0 0 0 7 0" fill="none" stroke="currentColor" stroke-width="1.5"/><path d="M2 17a7 5.5 0 0 1 14 0" fill="none" stroke="currentColor" stroke-width="1.5"/></svg>
<svg style="position:absolute;left:54px;top:852px;color:#4a4a50" width="18" height="18" viewBox="0 0 18 18" fill="none" stroke="currentColor" stroke-width="1.4"><ellipse cx="9" cy="3" rx="4" ry="1.8"/><path d="M5 3v4.5M13 3v3"/><ellipse cx="5" cy="10" rx="4" ry="1.8"/><path d="M1 10v4c0 1 1.8 1.8 4 1.8s4-.8 4-1.8v-4M1 12h8"/><ellipse cx="13" cy="9" rx="4" ry="1.8"/><path d="M9 9v5c0 1 1.8 1.8 4 1.8s4-.8 4-1.8V9M9 11.5h8"/></svg>
<div style="position:absolute;left:1258px;top:88px;width:398px;height:144px;background:#f3f3f6;border-radius:0 0 6px 6px;box-shadow:0 3px 8px rgba(0,0,0,.22)"></div>
<svg style="position:absolute;left:1274.0px;top:100.0px;color:#4a4a50" width="24" height="24" viewBox="0 0 24 24" fill="none" stroke="#4a4a50" stroke-width="1.8" stroke-linecap="round" stroke-linejoin="round" ><path d="M12 14.5V1M6 7l6-6 6 6M4.5 22.5h15"/></svg>
<div style="position:absolute;left:1314px;top:100px;width:310px;height:24px;line-height:24px;font-size:14px;color:#333;letter-spacing:0.5px">Экспорт суточного плана/факта</div>
<svg style="position:absolute;left:1625px;top:102px" width="12" height="20" viewBox="0 0 12 20" fill="none" stroke="#444" stroke-width="1.6"><path d="M2 2l8 8-8 8"/></svg>
<svg style="position:absolute;left:1274.0px;top:148.0px;color:#4a4a50" width="24" height="24" viewBox="0 0 24 24" fill="none" stroke="#4a4a50" stroke-width="1.8" stroke-linecap="round" stroke-linejoin="round" ><path d="M12 0v14M6 8l6 6 6-6M4.5 22.5h15"/></svg>
<div style="position:absolute;left:1314px;top:148px;width:310px;height:24px;line-height:24px;font-size:14px;color:#333;letter-spacing:0.5px">Импорт суточного плана/факта</div>
<svg style="position:absolute;left:1625px;top:150px" width="12" height="20" viewBox="0 0 12 20" fill="none" stroke="#444" stroke-width="1.6"><path d="M2 2l8 8-8 8"/></svg>
<svg style="position:absolute;left:1274.0px;top:196.0px;color:#4a4a50" width="24" height="24" viewBox="0 0 24 24" fill="none" stroke="#4a4a50" stroke-width="1.8" stroke-linecap="round" stroke-linejoin="round" ><circle cx="15" cy="10" r="8.8"/><path d="M1 23.5l6.5-6.5"/><circle cx="18" cy="18.5" r="4.8" fill="#f3f3f6"/><path d="M17.5 16v2.8l1.5 1.5" stroke-width="1.5"/></svg>
<div style="position:absolute;left:1314px;top:196px;width:310px;height:24px;line-height:24px;font-size:14px;color:#333;letter-spacing:0.5px">Отчет по истории ввода суточных данных</div>
<svg style="position:absolute;left:1625px;top:198px" width="12" height="20" viewBox="0 0 12 20" fill="none" stroke="#444" stroke-width="1.6"><path d="M2 2l8 8-8 8"/></svg>
<div style="position:absolute;left:858px;top:184px;width:400px;height:424px;background:#f3f3f6;border-radius:4px;box-shadow:0 3px 10px rgba(0,0,0,.28);overflow:hidden">
<div style="position:absolute;left:0px;top:0px;width:400px;height:86px;background:#1b74d3"></div>
<div style="position:absolute;left:16px;top:18px;width:300px;height:22px;line-height:22px;font-size:14px;color:#b2d2f3;letter-spacing:0.6px;-webkit-text-stroke:0.2px #b2d2f3">Задать диапазон</div>
<div style="position:absolute;left:15px;top:42px;width:300px;height:30px;line-height:30px;font-size:23px;color:#fff;letter-spacing:1.2px;-webkit-text-stroke:0.45px #fff">18 дней</div>
</div>
<svg style="position:absolute;left:885px;top:294px" width="12" height="16" viewBox="0 0 12 16" fill="none" stroke="#111" stroke-width="2"><path d="M9 2L3 8l6 6"/></svg>
<svg style="position:absolute;left:1113px;top:294px" width="12" height="16" viewBox="0 0 12 16" fill="none" stroke="#111" stroke-width="2"><path d="M3 2l6 6-6 6"/></svg>
<svg style="position:absolute;left:1137px;top:294px" width="12" height="16" viewBox="0 0 12 16" fill="none" stroke="#111" stroke-width="2"><path d="M9 2L3 8l6 6"/></svg>
<svg style="position:absolute;left:1218px;top:294px" width="12" height="16" viewBox="0 0 12 16" fill="none" stroke="#111" stroke-width="2"><path d="M3 2l6 6-6 6"/></svg>
<div style="position:absolute;left:955px;top:290px;width:100px;height:24px;line-height:24px;font-size:14px;color:#222;text-align:center">Март</div>
<div style="position:absolute;left:1134px;top:290px;width:100px;height:24px;line-height:24px;font-size:15px;color:#222;text-align:center">2026</div>
<div style="position:absolute;left:875.0px;top:323px;width:50px;height:22px;line-height:22px;font-size:13px;color:#a8a8ae;text-align:center">Пн</div>
<div style="position:absolute;left:927.5px;top:323px;width:50px;height:22px;line-height:22px;font-size:13px;color:#a8a8ae;text-align:center">Вт</div>
<div style="position:absolute;left:980.0px;top:323px;width:50px;height:22px;line-height:22px;font-size:13px;color:#a8a8ae;text-align:center">Ср</div>
<div style="position:absolute;left:1032.5px;top:323px;width:50px;height:22px;line-height:22px;font-size:13px;color:#a8a8ae;text-align:center">Чт</div>
<div style="position:absolute;left:1085.0px;top:323px;width:50px;height:22px;line-height:22px;font-size:13px;color:#a8a8ae;text-align:center">Пт</div>
<div style="position:absolute;left:1137.5px;top:323px;width:50px;height:22px;line-height:22px;font-size:13px;color:#a8a8ae;text-align:center">Сб</div>
<div style="position:absolute;left:1190.0px;top:323px;width:50px;height:22px;line-height:22px;font-size:13px;color:#a8a8ae;text-align:center">Вс</div>
<div style="position:absolute;left:900px;top:383px;width:342px;height:30px;background:#b2cdea"></div>
<div style="position:absolute;left:874px;top:415px;width:368px;height:30px;background:#b2cdea"></div>
<div style="position:absolute;left:874px;top:447px;width:183px;height:30px;background:#b2cdea"></div>
<div style="position:absolute;left:885px;top:383px;width:30px;height:30px;border-radius:50%;background:#1b74d3"></div>
<div style="position:absolute;left:1042px;top:447px;width:30px;height:30px;border-radius:50%;background:#1b74d3"></div>
<div style="position:absolute;left:1190.0px;top:355px;width:50px;height:24px;line-height:24px;font-size:15px;color:#1a1a1a;text-align:center">1</div>
<div style="position:absolute;left:875.0px;top:387px;width:50px;height:24px;line-height:24px;font-size:15px;color:#fff;text-align:center">2</div>
<div style="position:absolute;left:927.5px;top:387px;width:50px;height:24px;line-height:24px;font-size:15px;color:#fff;text-align:center">3</div>
<div style="position:absolute;left:980.0px;top:387px;width:50px;height:24px;line-height:24px;font-size:15px;color:#fff;text-align:center">4</div>
<div style="position:absolute;left:1032.5px;top:387px;width:50px;height:24px;line-height:24px;font-size:15px;color:#fff;text-align:center">5</div>
<div style="position:absolute;left:1085.0px;top:387px;width:50px;height:24px;line-height:24px;font-size:15px;color:#fff;text-align:center">6</div>
<div style="position:absolute;left:1137.5px;top:387px;width:50px;height:24px;line-height:24px;font-size:15px;color:#fff;text-align:center">7</div>
<div style="position:absolute;left:1190.0px;top:387px;width:50px;height:24px;line-height:24px;font-size:15px;color:#fff;text-align:center">8</div>
<div style="position:absolute;left:875.0px;top:419px;width:50px;height:24px;line-height:24px;font-size:15px;color:#fff;text-align:center">9</div>
<div style="position:absolute;left:927.5px;top:419px;width:50px;height:24px;line-height:24px;font-size:15px;color:#fff;text-align:center">10</div>
<div style="position:absolute;left:980.0px;top:419px;width:50px;height:24px;line-height:24px;font-size:15px;color:#fff;text-align:center">11</div>
<div style="position:absolute;left:1032.5px;top:419px;width:50px;height:24px;line-height:24px;font-size:15px;color:#fff;text-align:center">12</div>
<div style="position:absolute;left:1085.0px;top:419px;width:50px;height:24px;line-height:24px;font-size:15px;color:#fff;text-align:center">13</div>
<div style="position:absolute;left:1137.5px;top:419px;width:50px;height:24px;line-height:24px;font-size:15px;color:#fff;text-align:center">14</div>
<div style="position:absolute;left:1190.0px;top:419px;width:50px;height:24px;line-height:24px;font-size:15px;color:#fff;text-align:center">15</div>
<div style="position:absolute;left:875.0px;top:451px;width:50px;height:24px;line-height:24px;font-size:15px;color:#fff;text-align:center">16</div>
<div style="position:absolute;left:927.5px;top:451px;width:50px;height:24px;line-height:24px;font-size:15px;color:#fff;text-align:center">17</div>
<div style="position:absolute;left:980.0px;top:451px;width:50px;height:24px;line-height:24px;font-size:15px;color:#fff;text-align:center">18</div>
<div style="position:absolute;left:1032.5px;top:451px;width:50px;height:24px;line-height:24px;font-size:15px;color:#fff;text-align:center">19</div>
<div style="position:absolute;left:1085.0px;top:451px;width:50px;height:24px;line-height:24px;font-size:15px;color:#1a1a1a;text-align:center">20</div>
<div style="position:absolute;left:1137.5px;top:451px;width:50px;height:24px;line-height:24px;font-size:15px;color:#1a1a1a;text-align:center">21</div>
<div style="position:absolute;left:1190.0px;top:451px;width:50px;height:24px;line-height:24px;font-size:15px;color:#1a1a1a;text-align:center">22</div>
<div style="position:absolute;left:875.0px;top:483px;width:50px;height:24px;line-height:24px;font-size:15px;color:#1a1a1a;text-align:center">23</div>
<div style="position:absolute;left:927.5px;top:483px;width:50px;height:24px;line-height:24px;font-size:15px;color:#1a1a1a;text-align:center">24</div>
<div style="position:absolute;left:980.0px;top:483px;width:50px;height:24px;line-height:24px;font-size:15px;color:#1a1a1a;text-align:center">25</div>
<div style="position:absolute;left:1032.5px;top:483px;width:50px;height:24px;line-height:24px;font-size:15px;color:#1a1a1a;text-align:center">26</div>
<div style="position:absolute;left:1085.0px;top:483px;width:50px;height:24px;line-height:24px;font-size:15px;color:#1a1a1a;text-align:center">27</div>
<div style="position:absolute;left:1137.5px;top:483px;width:50px;height:24px;line-height:24px;font-size:15px;color:#1a1a1a;text-align:center">28</div>
<div style="position:absolute;left:1190.0px;top:483px;width:50px;height:24px;line-height:24px;font-size:15px;color:#1a1a1a;text-align:center">29</div>
<div style="position:absolute;left:875.0px;top:515px;width:50px;height:24px;line-height:24px;font-size:15px;color:#1a1a1a;text-align:center">30</div>
<div style="position:absolute;left:927.5px;top:515px;width:50px;height:24px;line-height:24px;font-size:15px;color:#1a1a1a;text-align:center">31</div>
<div style="position:absolute;left:874px;top:561px;width:145px;height:31px;border:1.5px solid #6aa7e6;border-radius:4px;font-size:14px;line-height:28px;text-align:center;color:#1b74d3;letter-spacing:0.55px">Сбросить период</div>
<div style="position:absolute;left:1115px;top:561px;width:127px;height:31px;background:#1b74d3;border-radius:4px;box-shadow:0 1px 3px rgba(0,0,0,.3);font-size:14px;line-height:31px;text-align:center;color:#fff;-webkit-text-stroke:0.4px #fff;letter-spacing:0.3px">Сформировать</div>
<svg style="position:absolute;left:0;top:0" width="1918" height="910" fill="none"><path d="M1452.5 226V286" stroke="#000" stroke-width="3"/><path d="M1447 229l5.5-12.5 5.5 12.5z" fill="#000"/><ellipse cx="1454" cy="303" rx="15.5" ry="17.5" fill="#fff" stroke="#000" stroke-width="3"/><path d="M1254 579H1307" stroke="#000" stroke-width="3"/><path d="M1253 573.5l-12.5 5.5 12.5 5.5z" fill="#000"/><ellipse cx="1322" cy="579" rx="15.5" ry="17.2" fill="#fff" stroke="#000" stroke-width="3"/><text x="1454" y="311" font-size="21" text-anchor="middle" fill="#000" font-family="Liberation Sans">1</text><text x="1322" y="587" font-size="21" text-anchor="middle" fill="#000" font-family="Liberation Sans">2</text></svg>
</body></html>
